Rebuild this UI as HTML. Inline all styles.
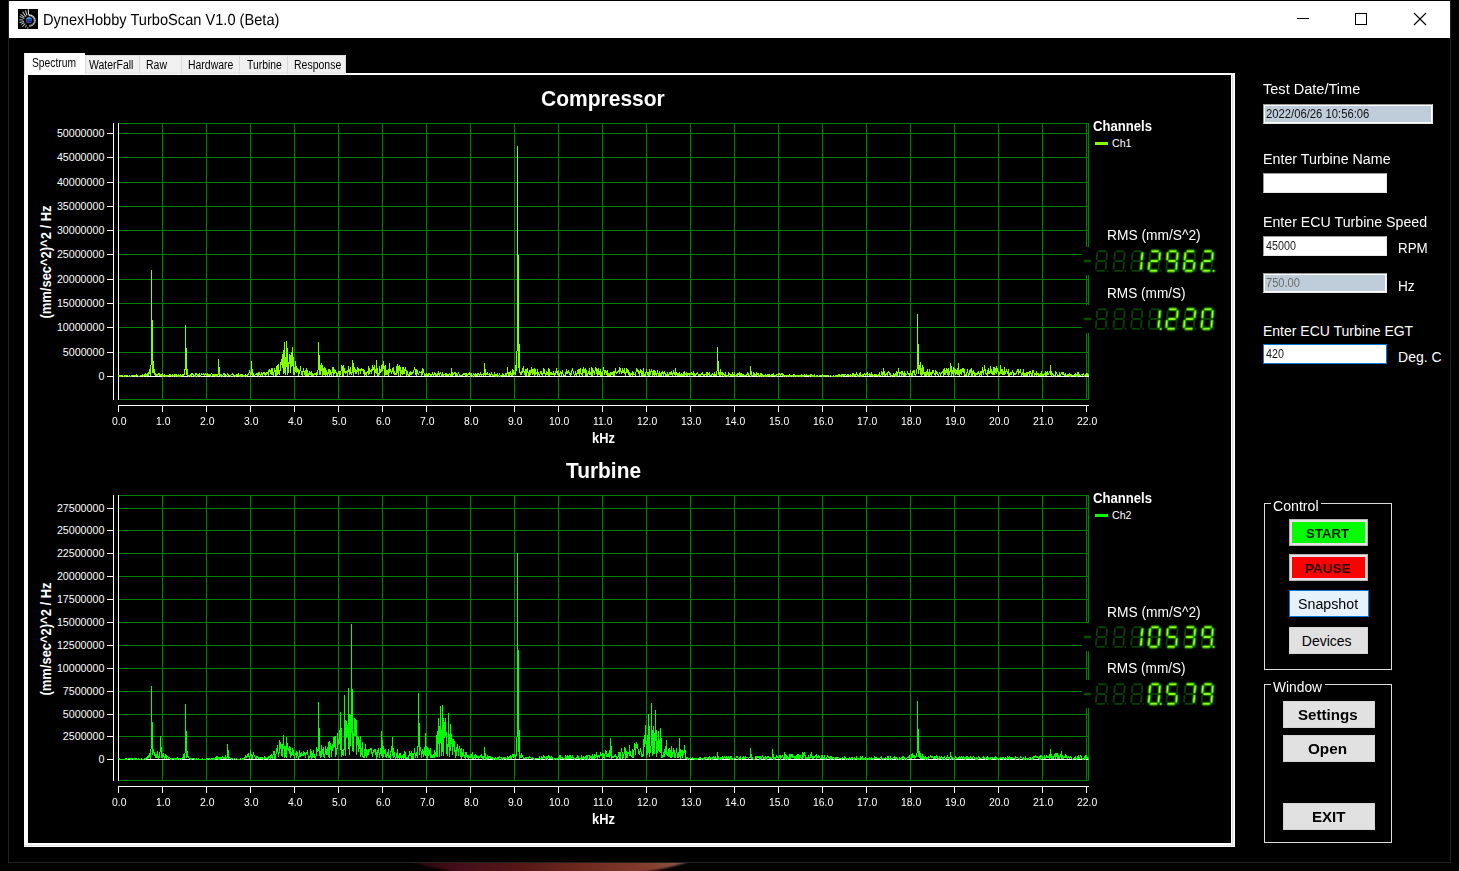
<!DOCTYPE html>
<html lang="en">
<head>
<meta charset="utf-8">
<title>DynexHobby TurboScan V1.0 (Beta)</title>
<style>
html,body{margin:0;padding:0;background:#000;}
html{width:1459px;height:871px;overflow:hidden;}
#desk{left:0;top:0;width:1459px;height:871px;overflow:hidden;}
body{width:1459px;height:871px;position:relative;overflow:hidden;
 font-family:"Liberation Sans",sans-serif;}
.abs,.t{position:absolute;}
.t{line-height:1;white-space:nowrap;transform-origin:0 0;color:#fff;}
#blob{left:398px;top:822px;width:304px;height:56px;border-radius:50%;filter:blur(1.2px);
 background:linear-gradient(90deg,#14040a 0%,#2e080e 8%,#47101a 22%,#551716 40%,#6a271d 58%,#7c3528 74%,#86402f 84%,#8a5748 92%,#9a8a84 97%,#3a3030 100%);}
#win{left:8px;top:0;width:1441px;height:861px;border:1px solid #222;border-top-color:#000;background:#000;}
#tb{left:9px;top:1px;width:1441px;height:37px;background:#fff;}
.tab{position:absolute;top:55px;height:19px;background:#f0f0f0;border:1px solid #d9d9d9;border-bottom-color:#e4e4e4;box-sizing:border-box;}
#tabsel{left:24px;top:53px;width:61px;height:22px;background:#fff;border-left:1px solid #e6e6e6;box-sizing:border-box;z-index:2;}
#panel{left:24px;top:73px;width:1203px;height:768px;border:4px solid #fff;border-top-width:2px;background:#000;}
#panel:after{content:"";position:absolute;left:-4px;right:-2px;bottom:-3px;height:1px;background:#e2e2e2;}
#panel:before{content:"";position:absolute;right:-2px;top:-2px;bottom:-3px;width:1px;background:#dedede;box-shadow:1px 0 0 #f4f4f4;}
.fld{position:absolute;box-sizing:border-box;height:20px;border:1px solid #9a9a9a;border-right-color:#e8e8e8;border-bottom-color:#e8e8e8;background:#fff;}
.fld.ro{background:#bfcddb;box-shadow:inset 0 0 0 1px #fff;}
.fld.foc{border:1px solid #0078d7;}
.grp{position:absolute;box-sizing:border-box;border:1px solid #dcdcdc;}
.btn{position:absolute;box-sizing:border-box;background:#e1e1e1;border:1px solid #d4d4d4;}
.btn.c{border:1px solid #b9b5b7;box-shadow:inset 0 0 0 2px #e6e1e3;}
svg{position:absolute;left:0;top:0;}
</style>
</head>
<body>
<div class="abs" id="desk"><div class="abs" id="blob"></div></div><div class="abs" id="win"></div><div class="abs" id="tb"></div><svg width="1459" height="40" viewBox="0 0 1459 40">
<rect x="18" y="9" width="20" height="20" fill="#000"/>
<defs><linearGradient id="ib" x1="0" y1="0" x2="0" y2="1"><stop offset="0" stop-color="#49c8ff"/><stop offset=".45" stop-color="#2466e4"/><stop offset="1" stop-color="#4b3cb0"/></linearGradient>
<linearGradient id="ir" x1="0" y1="0" x2="0" y2="1"><stop offset="0" stop-color="#dedede"/><stop offset=".5" stop-color="#b2b2b2"/><stop offset="1" stop-color="#a6a6a6"/></linearGradient></defs>
<g fill="none">
<path d="M28.3 9.2 L28.5 14.8" stroke="#dadada" stroke-width="1.1"/>
<path d="M28.7 15.4 A5.2 5.2 0 1 1 29.1 25.7" stroke="url(#ir)" stroke-width="1.9" stroke-dasharray="1.7 0.22"/>
<path d="M27.7 27.2 L27.8 28.9" stroke="#9c9c9c" stroke-width="1"/>
<g stroke-width="1.05"><line x1="27.0" y1="15.4" x2="25.4" y2="10.3" stroke="#c9c9c9"/><line x1="26.0" y1="16.6" x2="22.6" y2="11.7" stroke="#c4c4c4"/><line x1="24.4" y1="17.3" x2="20.4" y2="14.4" stroke="#b4b4b4"/><line x1="24.4" y1="18.6" x2="19.6" y2="16.6" stroke="#a8a8a8"/><line x1="23.4" y1="20.0" x2="19.3" y2="19.7" stroke="#b4b4b4"/><line x1="24.1" y1="21.4" x2="19.6" y2="22.4" stroke="#bcbcbc"/><line x1="24.0" y1="22.8" x2="21.0" y2="24.4" stroke="#b4b4b4"/><line x1="25.3" y1="23.6" x2="22.3" y2="26.6" stroke="#b0b0b0"/><line x1="26.4" y1="25.1" x2="25.4" y2="27.4" stroke="#b8b8b8"/></g></g>
<circle cx="28.95" cy="20.2" r="3.05" fill="url(#ib)"/>
<text x="29.0" y="21.7" font-family="Liberation Sans, sans-serif" font-size="4.3" font-weight="bold" text-anchor="middle" fill="#0e1638">3D</text>
<g fill="none" stroke="#000" stroke-width="1" shape-rendering="crispEdges">
<line x1="1297" y1="18.5" x2="1309" y2="18.5"/>
<rect x="1355.5" y="13.5" width="11" height="11"/>
</g>
<g fill="none" stroke="#000" stroke-width="1.1">
<line x1="1414" y1="13" x2="1426" y2="25"/>
<line x1="1426" y1="13" x2="1414" y2="25"/>
</g>
</svg><span class="t" style="left:42.60px;top:13px;font-size:16px;transform:scaleX(0.9134);color:#000;text-rendering:geometricPrecision;">DynexHobby TurboScan V1.0 (Beta)</span><div class="abs" id="panel"></div><div class="abs" style="left:24px;top:74px;width:1211px;height:1px;background:#fff"></div><div class="abs" id="tabsel"></div><span class="t" style="left:32.10px;top:57px;font-size:12px;transform:scaleX(0.8567);color:#000;z-index:3;">Spectrum</span><div class="tab" style="left:85px;width:55px"></div><span class="t" style="left:89.00px;top:59px;font-size:12px;transform:scaleX(0.8721);color:#000;">WaterFall</span><div class="tab" style="left:139px;width:43px"></div><span class="t" style="left:146.40px;top:59px;font-size:12px;transform:scaleX(0.8739);color:#000;">Raw</span><div class="tab" style="left:181px;width:59px"></div><span class="t" style="left:188.00px;top:59px;font-size:12px;transform:scaleX(0.8708);color:#000;">Hardware</span><div class="tab" style="left:239px;width:49px"></div><span class="t" style="left:246.60px;top:59px;font-size:12px;transform:scaleX(0.8650);color:#000;">Turbine</span><div class="tab" style="left:287px;width:59px"></div><span class="t" style="left:294.10px;top:59px;font-size:12px;transform:scaleX(0.8754);color:#000;">Response</span><svg width="1235" height="296" viewBox="0 121 1235 296" style="top:121px"><g shape-rendering="crispEdges" fill="none" stroke-width="1"><path stroke="#008000" d="M118 376.5H1089M118 352.5H1089M118 327.5H1089M118 303.5H1089M118 279.5H1089M118 254.5H1089M118 230.5H1089M118 206.5H1089M118 182.5H1089M118 157.5H1089M118 133.5H1089M118 123.5H1089M118 399.5H1089M162.5 123V400M206.5 123V400M250.5 123V400M294.5 123V400M338.5 123V400M382.5 123V400M426.5 123V400M470.5 123V400M514.5 123V400M558.5 123V400M602.5 123V400M646.5 123V400M690.5 123V400M734.5 123V400M778.5 123V400M822.5 123V400M866.5 123V400M910.5 123V400M954.5 123V400M998.5 123V400M1042.5 123V400M1086.5 123V400M1088.5 123V400"/><path stroke="#fff" d="M113.5 123V400M118.5 123V400M118 376.5H1089M118 405.5H1089M107 376.5H114M107 352.5H114M107 327.5H114M107 303.5H114M107 279.5H114M107 254.5H114M107 230.5H114M107 206.5H114M107 182.5H114M107 157.5H114M107 133.5H114M118.5 405V412M162.5 405V412M206.5 405V412M250.5 405V412M294.5 405V412M338.5 405V412M382.5 405V412M426.5 405V412M470.5 405V412M514.5 405V412M558.5 405V412M602.5 405V412M646.5 405V412M690.5 405V412M734.5 405V412M778.5 405V412M822.5 405V412M866.5 405V412M910.5 405V412M954.5 405V412M998.5 405V412M1042.5 405V412M1086.5 405V412"/></g><polyline fill="none" stroke="#7fff00" stroke-width="1" stroke-linejoin="bevel" stroke-linecap="square" shape-rendering="crispEdges" points="118.5,376.5 118.5,375.5 119.5,375.5 119.5,376.5 120.5,376.5 120.5,375.5 121.5,376.5 121.5,375.5 122.5,375.5 122.5,375.5 123.5,376.5 123.5,376.5 124.5,376.5 124.5,375.5 125.5,375.5 125.5,376.5 126.5,375.5 126.5,375.5 127.5,375.5 127.5,375.5 128.5,376.5 128.5,376.5 129.5,375.5 129.5,376.5 130.5,376.5 130.5,376.5 131.5,376.5 131.5,375.5 132.5,375.5 132.5,375.5 133.5,375.5 133.5,375.5 134.5,375.5 134.5,375.5 135.5,375.5 135.5,376.5 136.5,374.5 136.5,374.5 137.5,375.5 137.5,375.5 138.5,376.5 138.5,376.5 139.5,376.5 139.5,376.5 140.5,375.5 140.5,375.5 141.5,375.5 141.5,375.5 142.5,374.5 142.5,374.5 143.5,376.5 143.5,376.5 144.5,374.5 144.5,375.5 145.5,373.5 145.5,375.5 146.5,376.5 146.5,374.5 147.5,373.5 147.5,375.5 148.5,375.5 148.5,375.5 149.5,369.5 149.5,371.5 150.5,375.5 150.5,370.5 151.5,359.5 151.5,270.5 152.5,366.5 152.5,372.5 153.5,361.5 153.5,371.5 154.5,374.5 154.5,369.5 155.5,375.5 155.5,373.5 156.5,375.5 156.5,375.5 157.5,375.5 157.5,375.5 158.5,373.5 158.5,374.5 159.5,375.5 159.5,373.5 160.5,375.5 160.5,375.5 161.5,374.5 161.5,374.5 162.5,376.5 162.5,373.5 163.5,376.5 163.5,375.5 164.5,374.5 164.5,375.5 165.5,375.5 165.5,376.5 166.5,376.5 166.5,375.5 167.5,376.5 167.5,375.5 168.5,375.5 168.5,375.5 169.5,374.5 169.5,375.5 170.5,375.5 170.5,374.5 171.5,376.5 171.5,376.5 172.5,374.5 172.5,374.5 173.5,376.5 173.5,376.5 174.5,375.5 174.5,374.5 175.5,376.5 175.5,374.5 176.5,374.5 176.5,375.5 177.5,375.5 177.5,376.5 178.5,376.5 178.5,374.5 179.5,376.5 179.5,375.5 180.5,376.5 180.5,374.5 181.5,375.5 181.5,375.5 182.5,375.5 182.5,374.5 183.5,375.5 183.5,375.5 184.5,373.5 184.5,370.5 185.5,368.5 185.5,325.5 186.5,369.5 186.5,374.5 187.5,369.5 187.5,375.5 188.5,375.5 188.5,376.5 189.5,375.5 189.5,375.5 190.5,374.5 190.5,376.5 191.5,375.5 191.5,373.5 192.5,373.5 192.5,374.5 193.5,374.5 193.5,374.5 194.5,376.5 194.5,376.5 195.5,376.5 195.5,373.5 196.5,374.5 196.5,373.5 197.5,376.5 197.5,374.5 198.5,375.5 198.5,374.5 199.5,375.5 199.5,373.5 200.5,376.5 200.5,375.5 201.5,374.5 201.5,373.5 202.5,374.5 202.5,374.5 203.5,374.5 203.5,373.5 204.5,375.5 204.5,374.5 205.5,373.5 205.5,373.5 206.5,375.5 206.5,374.5 207.5,373.5 207.5,375.5 208.5,374.5 208.5,375.5 209.5,375.5 209.5,374.5 210.5,376.5 210.5,374.5 211.5,373.5 211.5,373.5 212.5,374.5 212.5,375.5 213.5,374.5 213.5,375.5 214.5,375.5 214.5,374.5 215.5,376.5 215.5,374.5 216.5,376.5 216.5,374.5 217.5,374.5 217.5,375.5 218.5,373.5 218.5,359.5 219.5,374.5 219.5,375.5 220.5,374.5 220.5,376.5 221.5,375.5 221.5,374.5 222.5,376.5 222.5,376.5 223.5,373.5 223.5,374.5 224.5,375.5 224.5,373.5 225.5,375.5 225.5,374.5 226.5,376.5 226.5,375.5 227.5,374.5 227.5,373.5 228.5,374.5 228.5,375.5 229.5,375.5 229.5,375.5 230.5,376.5 230.5,375.5 231.5,374.5 231.5,374.5 232.5,374.5 232.5,373.5 233.5,375.5 233.5,376.5 234.5,375.5 234.5,375.5 235.5,376.5 235.5,375.5 236.5,374.5 236.5,375.5 237.5,375.5 237.5,374.5 238.5,373.5 238.5,375.5 239.5,376.5 239.5,376.5 240.5,374.5 240.5,376.5 241.5,374.5 241.5,375.5 242.5,375.5 242.5,374.5 243.5,376.5 243.5,376.5 244.5,375.5 244.5,376.5 245.5,374.5 245.5,375.5 246.5,376.5 246.5,376.5 247.5,374.5 247.5,375.5 248.5,373.5 248.5,373.5 249.5,372.5 249.5,370.5 250.5,373.5 250.5,375.5 251.5,374.5 251.5,361.5 252.5,375.5 252.5,375.5 253.5,373.5 253.5,375.5 254.5,375.5 254.5,375.5 255.5,374.5 255.5,374.5 256.5,374.5 256.5,373.5 257.5,375.5 257.5,373.5 258.5,372.5 258.5,376.5 259.5,372.5 259.5,373.5 260.5,375.5 260.5,374.5 261.5,374.5 261.5,372.5 262.5,375.5 262.5,374.5 263.5,372.5 263.5,373.5 264.5,372.5 264.5,374.5 265.5,373.5 265.5,375.5 266.5,373.5 266.5,372.5 267.5,373.5 267.5,372.5 268.5,375.5 268.5,370.5 269.5,369.5 269.5,369.5 270.5,373.5 270.5,370.5 271.5,374.5 271.5,368.5 272.5,368.5 272.5,373.5 273.5,375.5 273.5,372.5 274.5,371.5 274.5,368.5 275.5,371.5 275.5,375.5 276.5,366.5 276.5,375.5 277.5,365.5 277.5,374.5 278.5,372.5 278.5,364.5 279.5,374.5 279.5,374.5 280.5,368.5 280.5,364.5 281.5,360.5 281.5,364.5 282.5,354.5 282.5,367.5 283.5,350.5 283.5,373.5 284.5,371.5 284.5,342.5 285.5,370.5 285.5,374.5 286.5,360.5 286.5,341.5 287.5,353.5 287.5,374.5 288.5,370.5 288.5,368.5 289.5,356.5 289.5,354.5 290.5,372.5 290.5,357.5 291.5,352.5 291.5,366.5 292.5,364.5 292.5,347.5 293.5,366.5 293.5,374.5 294.5,367.5 294.5,374.5 295.5,361.5 295.5,370.5 296.5,372.5 296.5,366.5 297.5,370.5 297.5,371.5 298.5,369.5 298.5,375.5 299.5,371.5 299.5,373.5 300.5,366.5 300.5,366.5 301.5,374.5 301.5,372.5 302.5,375.5 302.5,373.5 303.5,369.5 303.5,368.5 304.5,373.5 304.5,374.5 305.5,375.5 305.5,372.5 306.5,368.5 306.5,375.5 307.5,370.5 307.5,375.5 308.5,375.5 308.5,375.5 309.5,371.5 309.5,374.5 310.5,374.5 310.5,372.5 311.5,375.5 311.5,371.5 312.5,375.5 312.5,373.5 313.5,375.5 313.5,375.5 314.5,373.5 314.5,373.5 315.5,374.5 315.5,374.5 316.5,372.5 316.5,375.5 317.5,374.5 317.5,370.5 318.5,369.5 318.5,342.5 319.5,366.5 319.5,374.5 320.5,365.5 320.5,374.5 321.5,368.5 321.5,363.5 322.5,367.5 322.5,375.5 323.5,374.5 323.5,368.5 324.5,374.5 324.5,367.5 325.5,368.5 325.5,375.5 326.5,374.5 326.5,370.5 327.5,374.5 327.5,375.5 328.5,369.5 328.5,373.5 329.5,369.5 329.5,375.5 330.5,373.5 330.5,370.5 331.5,375.5 331.5,374.5 332.5,370.5 332.5,367.5 333.5,367.5 333.5,375.5 334.5,372.5 334.5,369.5 335.5,372.5 335.5,370.5 336.5,374.5 336.5,375.5 337.5,375.5 337.5,375.5 338.5,371.5 338.5,372.5 339.5,371.5 339.5,375.5 340.5,374.5 340.5,374.5 341.5,367.5 341.5,365.5 342.5,366.5 342.5,375.5 343.5,375.5 343.5,365.5 344.5,372.5 344.5,368.5 345.5,373.5 345.5,372.5 346.5,371.5 346.5,372.5 347.5,370.5 347.5,375.5 348.5,368.5 348.5,366.5 349.5,374.5 349.5,371.5 350.5,367.5 350.5,372.5 351.5,374.5 351.5,374.5 352.5,370.5 352.5,360.5 353.5,365.5 353.5,375.5 354.5,369.5 354.5,367.5 355.5,371.5 355.5,373.5 356.5,372.5 356.5,373.5 357.5,367.5 357.5,369.5 358.5,374.5 358.5,368.5 359.5,370.5 359.5,370.5 360.5,369.5 360.5,373.5 361.5,368.5 361.5,368.5 362.5,370.5 362.5,369.5 363.5,369.5 363.5,373.5 364.5,370.5 364.5,375.5 365.5,374.5 365.5,372.5 366.5,375.5 366.5,373.5 367.5,371.5 367.5,371.5 368.5,374.5 368.5,366.5 369.5,370.5 369.5,373.5 370.5,370.5 370.5,371.5 371.5,372.5 371.5,373.5 372.5,365.5 372.5,370.5 373.5,369.5 373.5,369.5 374.5,365.5 374.5,375.5 375.5,370.5 375.5,369.5 376.5,373.5 376.5,360.5 377.5,375.5 377.5,375.5 378.5,373.5 378.5,375.5 379.5,374.5 379.5,366.5 380.5,371.5 380.5,372.5 381.5,365.5 381.5,371.5 382.5,364.5 382.5,370.5 383.5,367.5 383.5,361.5 384.5,370.5 384.5,375.5 385.5,374.5 385.5,365.5 386.5,374.5 386.5,372.5 387.5,374.5 387.5,371.5 388.5,369.5 388.5,375.5 389.5,363.5 389.5,372.5 390.5,370.5 390.5,369.5 391.5,372.5 391.5,373.5 392.5,368.5 392.5,369.5 393.5,373.5 393.5,367.5 394.5,373.5 394.5,374.5 395.5,373.5 395.5,374.5 396.5,374.5 396.5,366.5 397.5,372.5 397.5,364.5 398.5,368.5 398.5,375.5 399.5,365.5 399.5,366.5 400.5,375.5 400.5,367.5 401.5,373.5 401.5,372.5 402.5,367.5 402.5,374.5 403.5,372.5 403.5,367.5 404.5,370.5 404.5,373.5 405.5,367.5 405.5,369.5 406.5,371.5 406.5,375.5 407.5,371.5 407.5,373.5 408.5,375.5 408.5,375.5 409.5,372.5 409.5,375.5 410.5,373.5 410.5,371.5 411.5,373.5 411.5,374.5 412.5,372.5 412.5,373.5 413.5,370.5 413.5,372.5 414.5,367.5 414.5,368.5 415.5,370.5 415.5,374.5 416.5,375.5 416.5,369.5 417.5,370.5 417.5,372.5 418.5,374.5 418.5,374.5 419.5,371.5 419.5,372.5 420.5,372.5 420.5,372.5 421.5,371.5 421.5,375.5 422.5,374.5 422.5,368.5 423.5,369.5 423.5,369.5 424.5,375.5 424.5,375.5 425.5,375.5 425.5,374.5 426.5,373.5 426.5,375.5 427.5,374.5 427.5,375.5 428.5,375.5 428.5,373.5 429.5,374.5 429.5,373.5 430.5,375.5 430.5,374.5 431.5,375.5 431.5,375.5 432.5,373.5 432.5,372.5 433.5,375.5 433.5,375.5 434.5,372.5 434.5,374.5 435.5,373.5 435.5,375.5 436.5,375.5 436.5,375.5 437.5,373.5 437.5,375.5 438.5,373.5 438.5,371.5 439.5,375.5 439.5,374.5 440.5,373.5 440.5,372.5 441.5,375.5 441.5,375.5 442.5,375.5 442.5,372.5 443.5,375.5 443.5,375.5 444.5,374.5 444.5,374.5 445.5,373.5 445.5,375.5 446.5,373.5 446.5,375.5 447.5,375.5 447.5,374.5 448.5,375.5 448.5,375.5 449.5,373.5 449.5,373.5 450.5,375.5 450.5,375.5 451.5,375.5 451.5,368.5 452.5,375.5 452.5,375.5 453.5,373.5 453.5,374.5 454.5,372.5 454.5,372.5 455.5,372.5 455.5,375.5 456.5,373.5 456.5,375.5 457.5,375.5 457.5,375.5 458.5,372.5 458.5,372.5 459.5,375.5 459.5,375.5 460.5,375.5 460.5,375.5 461.5,375.5 461.5,375.5 462.5,375.5 462.5,374.5 463.5,373.5 463.5,374.5 464.5,373.5 464.5,374.5 465.5,375.5 465.5,373.5 466.5,373.5 466.5,375.5 467.5,376.5 467.5,374.5 468.5,374.5 468.5,374.5 469.5,372.5 469.5,374.5 470.5,373.5 470.5,376.5 471.5,374.5 471.5,373.5 472.5,376.5 472.5,376.5 473.5,373.5 473.5,373.5 474.5,376.5 474.5,374.5 475.5,375.5 475.5,373.5 476.5,374.5 476.5,375.5 477.5,375.5 477.5,373.5 478.5,374.5 478.5,373.5 479.5,375.5 479.5,375.5 480.5,372.5 480.5,374.5 481.5,375.5 481.5,374.5 482.5,374.5 482.5,374.5 483.5,373.5 483.5,375.5 484.5,373.5 484.5,363.5 485.5,373.5 485.5,375.5 486.5,373.5 486.5,373.5 487.5,372.5 487.5,374.5 488.5,374.5 488.5,374.5 489.5,373.5 489.5,375.5 490.5,375.5 490.5,375.5 491.5,373.5 491.5,372.5 492.5,375.5 492.5,375.5 493.5,375.5 493.5,375.5 494.5,375.5 494.5,372.5 495.5,376.5 495.5,375.5 496.5,376.5 496.5,374.5 497.5,373.5 497.5,375.5 498.5,376.5 498.5,375.5 499.5,374.5 499.5,373.5 500.5,376.5 500.5,376.5 501.5,375.5 501.5,375.5 502.5,375.5 502.5,373.5 503.5,374.5 503.5,375.5 504.5,375.5 504.5,375.5 505.5,375.5 505.5,373.5 506.5,375.5 506.5,374.5 507.5,372.5 507.5,367.5 508.5,375.5 508.5,375.5 509.5,372.5 509.5,375.5 510.5,374.5 510.5,371.5 511.5,374.5 511.5,375.5 512.5,375.5 512.5,369.5 513.5,370.5 513.5,374.5 514.5,372.5 514.5,372.5 515.5,374.5 515.5,365.5 516.5,370.5 516.5,362.5 517.5,339.5 517.5,146.5 518.5,360.5 518.5,367.5 519.5,344.5 519.5,370.5 520.5,374.5 520.5,374.5 521.5,374.5 521.5,374.5 522.5,368.5 522.5,372.5 523.5,371.5 523.5,366.5 524.5,374.5 524.5,372.5 525.5,375.5 525.5,369.5 526.5,375.5 526.5,369.5 527.5,368.5 527.5,369.5 528.5,375.5 528.5,374.5 529.5,370.5 529.5,375.5 530.5,373.5 530.5,373.5 531.5,367.5 531.5,372.5 532.5,369.5 532.5,374.5 533.5,369.5 533.5,373.5 534.5,368.5 534.5,375.5 535.5,369.5 535.5,374.5 536.5,372.5 536.5,372.5 537.5,375.5 537.5,369.5 538.5,374.5 538.5,374.5 539.5,375.5 539.5,374.5 540.5,373.5 540.5,371.5 541.5,374.5 541.5,371.5 542.5,375.5 542.5,373.5 543.5,373.5 543.5,368.5 544.5,369.5 544.5,371.5 545.5,375.5 545.5,374.5 546.5,371.5 546.5,374.5 547.5,372.5 547.5,373.5 548.5,375.5 548.5,368.5 549.5,370.5 549.5,375.5 550.5,372.5 550.5,374.5 551.5,374.5 551.5,372.5 552.5,374.5 552.5,374.5 553.5,374.5 553.5,371.5 554.5,374.5 554.5,375.5 555.5,371.5 555.5,374.5 556.5,368.5 556.5,372.5 557.5,371.5 557.5,374.5 558.5,370.5 558.5,375.5 559.5,375.5 559.5,375.5 560.5,371.5 560.5,371.5 561.5,375.5 561.5,374.5 562.5,370.5 562.5,372.5 563.5,375.5 563.5,375.5 564.5,375.5 564.5,375.5 565.5,374.5 565.5,375.5 566.5,369.5 566.5,373.5 567.5,373.5 567.5,372.5 568.5,370.5 568.5,370.5 569.5,374.5 569.5,374.5 570.5,373.5 570.5,375.5 571.5,374.5 571.5,371.5 572.5,368.5 572.5,370.5 573.5,371.5 573.5,372.5 574.5,375.5 574.5,374.5 575.5,374.5 575.5,371.5 576.5,375.5 576.5,374.5 577.5,373.5 577.5,370.5 578.5,369.5 578.5,372.5 579.5,375.5 579.5,370.5 580.5,368.5 580.5,372.5 581.5,374.5 581.5,373.5 582.5,375.5 582.5,371.5 583.5,367.5 583.5,372.5 584.5,371.5 584.5,369.5 585.5,375.5 585.5,368.5 586.5,371.5 586.5,375.5 587.5,375.5 587.5,374.5 588.5,372.5 588.5,371.5 589.5,374.5 589.5,368.5 590.5,374.5 590.5,373.5 591.5,375.5 591.5,367.5 592.5,375.5 592.5,368.5 593.5,372.5 593.5,372.5 594.5,372.5 594.5,374.5 595.5,368.5 595.5,367.5 596.5,369.5 596.5,372.5 597.5,375.5 597.5,369.5 598.5,374.5 598.5,368.5 599.5,374.5 599.5,372.5 600.5,369.5 600.5,375.5 601.5,372.5 601.5,375.5 602.5,375.5 602.5,375.5 603.5,367.5 603.5,368.5 604.5,371.5 604.5,374.5 605.5,371.5 605.5,370.5 606.5,374.5 606.5,372.5 607.5,370.5 607.5,375.5 608.5,375.5 608.5,373.5 609.5,375.5 609.5,373.5 610.5,372.5 610.5,375.5 611.5,372.5 611.5,374.5 612.5,372.5 612.5,374.5 613.5,371.5 613.5,375.5 614.5,371.5 614.5,375.5 615.5,368.5 615.5,372.5 616.5,373.5 616.5,373.5 617.5,371.5 617.5,371.5 618.5,370.5 618.5,370.5 619.5,373.5 619.5,367.5 620.5,369.5 620.5,369.5 621.5,373.5 621.5,373.5 622.5,372.5 622.5,368.5 623.5,372.5 623.5,372.5 624.5,373.5 624.5,368.5 625.5,374.5 625.5,375.5 626.5,370.5 626.5,368.5 627.5,370.5 627.5,372.5 628.5,370.5 628.5,374.5 629.5,372.5 629.5,375.5 630.5,375.5 630.5,373.5 631.5,373.5 631.5,373.5 632.5,375.5 632.5,371.5 633.5,373.5 633.5,374.5 634.5,374.5 634.5,374.5 635.5,374.5 635.5,375.5 636.5,369.5 636.5,368.5 637.5,371.5 637.5,369.5 638.5,373.5 638.5,370.5 639.5,375.5 639.5,371.5 640.5,372.5 640.5,369.5 641.5,375.5 641.5,370.5 642.5,375.5 642.5,373.5 643.5,368.5 643.5,375.5 644.5,375.5 644.5,374.5 645.5,374.5 645.5,375.5 646.5,369.5 646.5,370.5 647.5,374.5 647.5,374.5 648.5,372.5 648.5,375.5 649.5,375.5 649.5,369.5 650.5,374.5 650.5,373.5 651.5,369.5 651.5,369.5 652.5,373.5 652.5,375.5 653.5,374.5 653.5,370.5 654.5,370.5 654.5,375.5 655.5,371.5 655.5,374.5 656.5,374.5 656.5,375.5 657.5,371.5 657.5,370.5 658.5,375.5 658.5,373.5 659.5,375.5 659.5,371.5 660.5,375.5 660.5,375.5 661.5,372.5 661.5,375.5 662.5,371.5 662.5,371.5 663.5,372.5 663.5,375.5 664.5,372.5 664.5,371.5 665.5,374.5 665.5,375.5 666.5,375.5 666.5,375.5 667.5,372.5 667.5,375.5 668.5,375.5 668.5,375.5 669.5,373.5 669.5,372.5 670.5,374.5 670.5,373.5 671.5,371.5 671.5,373.5 672.5,375.5 672.5,375.5 673.5,370.5 673.5,372.5 674.5,374.5 674.5,372.5 675.5,375.5 675.5,368.5 676.5,374.5 676.5,373.5 677.5,373.5 677.5,375.5 678.5,373.5 678.5,375.5 679.5,375.5 679.5,372.5 680.5,375.5 680.5,375.5 681.5,373.5 681.5,375.5 682.5,375.5 682.5,374.5 683.5,375.5 683.5,372.5 684.5,371.5 684.5,375.5 685.5,374.5 685.5,373.5 686.5,375.5 686.5,372.5 687.5,374.5 687.5,375.5 688.5,374.5 688.5,373.5 689.5,375.5 689.5,373.5 690.5,373.5 690.5,374.5 691.5,374.5 691.5,372.5 692.5,373.5 692.5,374.5 693.5,371.5 693.5,375.5 694.5,373.5 694.5,375.5 695.5,374.5 695.5,375.5 696.5,374.5 696.5,373.5 697.5,373.5 697.5,372.5 698.5,375.5 698.5,374.5 699.5,375.5 699.5,374.5 700.5,374.5 700.5,375.5 701.5,374.5 701.5,373.5 702.5,374.5 702.5,372.5 703.5,375.5 703.5,375.5 704.5,375.5 704.5,374.5 705.5,374.5 705.5,374.5 706.5,375.5 706.5,372.5 707.5,375.5 707.5,372.5 708.5,374.5 708.5,374.5 709.5,372.5 709.5,375.5 710.5,375.5 710.5,375.5 711.5,375.5 711.5,375.5 712.5,373.5 712.5,374.5 713.5,375.5 713.5,374.5 714.5,375.5 714.5,372.5 715.5,375.5 715.5,375.5 716.5,375.5 716.5,371.5 717.5,370.5 717.5,347.5 718.5,374.5 718.5,374.5 719.5,372.5 719.5,375.5 720.5,369.5 720.5,375.5 721.5,374.5 721.5,372.5 722.5,372.5 722.5,375.5 723.5,374.5 723.5,373.5 724.5,376.5 724.5,375.5 725.5,372.5 725.5,375.5 726.5,375.5 726.5,375.5 727.5,375.5 727.5,376.5 728.5,376.5 728.5,372.5 729.5,373.5 729.5,373.5 730.5,375.5 730.5,375.5 731.5,374.5 731.5,375.5 732.5,375.5 732.5,372.5 733.5,375.5 733.5,375.5 734.5,372.5 734.5,374.5 735.5,376.5 735.5,375.5 736.5,374.5 736.5,376.5 737.5,375.5 737.5,373.5 738.5,373.5 738.5,374.5 739.5,372.5 739.5,375.5 740.5,375.5 740.5,373.5 741.5,375.5 741.5,373.5 742.5,375.5 742.5,375.5 743.5,375.5 743.5,374.5 744.5,375.5 744.5,375.5 745.5,375.5 745.5,375.5 746.5,375.5 746.5,375.5 747.5,372.5 747.5,374.5 748.5,373.5 748.5,375.5 749.5,375.5 749.5,375.5 750.5,374.5 750.5,366.5 751.5,375.5 751.5,376.5 752.5,375.5 752.5,375.5 753.5,375.5 753.5,372.5 754.5,374.5 754.5,375.5 755.5,375.5 755.5,375.5 756.5,372.5 756.5,375.5 757.5,373.5 757.5,374.5 758.5,373.5 758.5,376.5 759.5,375.5 759.5,375.5 760.5,376.5 760.5,373.5 761.5,375.5 761.5,373.5 762.5,374.5 762.5,376.5 763.5,375.5 763.5,375.5 764.5,376.5 764.5,375.5 765.5,374.5 765.5,376.5 766.5,375.5 766.5,375.5 767.5,374.5 767.5,376.5 768.5,374.5 768.5,375.5 769.5,374.5 769.5,374.5 770.5,376.5 770.5,375.5 771.5,375.5 771.5,374.5 772.5,375.5 772.5,375.5 773.5,373.5 773.5,375.5 774.5,375.5 774.5,375.5 775.5,375.5 775.5,376.5 776.5,376.5 776.5,374.5 777.5,374.5 777.5,374.5 778.5,373.5 778.5,375.5 779.5,374.5 779.5,373.5 780.5,375.5 780.5,374.5 781.5,374.5 781.5,373.5 782.5,373.5 782.5,375.5 783.5,374.5 783.5,376.5 784.5,375.5 784.5,375.5 785.5,376.5 785.5,375.5 786.5,375.5 786.5,375.5 787.5,375.5 787.5,376.5 788.5,375.5 788.5,375.5 789.5,376.5 789.5,374.5 790.5,375.5 790.5,376.5 791.5,375.5 791.5,375.5 792.5,376.5 792.5,375.5 793.5,374.5 793.5,375.5 794.5,374.5 794.5,376.5 795.5,375.5 795.5,375.5 796.5,376.5 796.5,375.5 797.5,376.5 797.5,375.5 798.5,375.5 798.5,375.5 799.5,375.5 799.5,376.5 800.5,376.5 800.5,375.5 801.5,374.5 801.5,375.5 802.5,376.5 802.5,375.5 803.5,376.5 803.5,375.5 804.5,375.5 804.5,374.5 805.5,375.5 805.5,375.5 806.5,374.5 806.5,375.5 807.5,375.5 807.5,375.5 808.5,375.5 808.5,375.5 809.5,376.5 809.5,375.5 810.5,374.5 810.5,375.5 811.5,374.5 811.5,376.5 812.5,376.5 812.5,375.5 813.5,376.5 813.5,376.5 814.5,374.5 814.5,376.5 815.5,376.5 815.5,376.5 816.5,375.5 816.5,376.5 817.5,376.5 817.5,375.5 818.5,376.5 818.5,376.5 819.5,375.5 819.5,375.5 820.5,375.5 820.5,375.5 821.5,375.5 821.5,375.5 822.5,374.5 822.5,376.5 823.5,376.5 823.5,375.5 824.5,376.5 824.5,375.5 825.5,375.5 825.5,375.5 826.5,375.5 826.5,375.5 827.5,376.5 827.5,375.5 828.5,375.5 828.5,375.5 829.5,376.5 829.5,376.5 830.5,375.5 830.5,375.5 831.5,376.5 831.5,376.5 832.5,376.5 832.5,376.5 833.5,375.5 833.5,376.5 834.5,376.5 834.5,376.5 835.5,376.5 835.5,375.5 836.5,376.5 836.5,375.5 837.5,375.5 837.5,375.5 838.5,376.5 838.5,374.5 839.5,374.5 839.5,376.5 840.5,376.5 840.5,375.5 841.5,374.5 841.5,375.5 842.5,374.5 842.5,376.5 843.5,374.5 843.5,375.5 844.5,375.5 844.5,374.5 845.5,374.5 845.5,374.5 846.5,375.5 846.5,375.5 847.5,374.5 847.5,375.5 848.5,374.5 848.5,374.5 849.5,376.5 849.5,375.5 850.5,374.5 850.5,375.5 851.5,376.5 851.5,376.5 852.5,374.5 852.5,373.5 853.5,373.5 853.5,376.5 854.5,374.5 854.5,375.5 855.5,374.5 855.5,375.5 856.5,373.5 856.5,372.5 857.5,376.5 857.5,374.5 858.5,376.5 858.5,376.5 859.5,375.5 859.5,374.5 860.5,372.5 860.5,376.5 861.5,375.5 861.5,376.5 862.5,374.5 862.5,375.5 863.5,375.5 863.5,375.5 864.5,373.5 864.5,373.5 865.5,375.5 865.5,375.5 866.5,374.5 866.5,373.5 867.5,372.5 867.5,375.5 868.5,374.5 868.5,374.5 869.5,373.5 869.5,375.5 870.5,375.5 870.5,375.5 871.5,372.5 871.5,375.5 872.5,374.5 872.5,375.5 873.5,375.5 873.5,376.5 874.5,374.5 874.5,375.5 875.5,374.5 875.5,375.5 876.5,375.5 876.5,374.5 877.5,375.5 877.5,375.5 878.5,376.5 878.5,376.5 879.5,372.5 879.5,375.5 880.5,375.5 880.5,375.5 881.5,374.5 881.5,371.5 882.5,375.5 882.5,372.5 883.5,374.5 883.5,368.5 884.5,373.5 884.5,375.5 885.5,375.5 885.5,374.5 886.5,373.5 886.5,374.5 887.5,375.5 887.5,372.5 888.5,372.5 888.5,371.5 889.5,374.5 889.5,372.5 890.5,373.5 890.5,375.5 891.5,376.5 891.5,375.5 892.5,375.5 892.5,375.5 893.5,375.5 893.5,373.5 894.5,375.5 894.5,374.5 895.5,376.5 895.5,375.5 896.5,371.5 896.5,376.5 897.5,374.5 897.5,372.5 898.5,372.5 898.5,368.5 899.5,375.5 899.5,375.5 900.5,372.5 900.5,373.5 901.5,371.5 901.5,375.5 902.5,371.5 902.5,374.5 903.5,373.5 903.5,375.5 904.5,371.5 904.5,375.5 905.5,373.5 905.5,375.5 906.5,374.5 906.5,374.5 907.5,373.5 907.5,371.5 908.5,374.5 908.5,373.5 909.5,374.5 909.5,375.5 910.5,370.5 910.5,374.5 911.5,375.5 911.5,374.5 912.5,371.5 912.5,375.5 913.5,370.5 913.5,372.5 914.5,370.5 914.5,374.5 915.5,375.5 915.5,374.5 916.5,373.5 916.5,372.5 917.5,366.5 917.5,314.5 918.5,372.5 918.5,373.5 919.5,367.5 919.5,365.5 920.5,374.5 920.5,362.5 921.5,373.5 921.5,375.5 922.5,374.5 922.5,365.5 923.5,373.5 923.5,367.5 924.5,375.5 924.5,374.5 925.5,372.5 925.5,375.5 926.5,375.5 926.5,372.5 927.5,369.5 927.5,374.5 928.5,375.5 928.5,374.5 929.5,369.5 929.5,375.5 930.5,372.5 930.5,374.5 931.5,372.5 931.5,375.5 932.5,372.5 932.5,370.5 933.5,370.5 933.5,372.5 934.5,373.5 934.5,373.5 935.5,375.5 935.5,370.5 936.5,372.5 936.5,373.5 937.5,372.5 937.5,374.5 938.5,374.5 938.5,375.5 939.5,372.5 939.5,373.5 940.5,373.5 940.5,375.5 941.5,372.5 941.5,373.5 942.5,372.5 942.5,372.5 943.5,369.5 943.5,375.5 944.5,373.5 944.5,368.5 945.5,371.5 945.5,374.5 946.5,371.5 946.5,368.5 947.5,374.5 947.5,369.5 948.5,375.5 948.5,368.5 949.5,373.5 949.5,374.5 950.5,369.5 950.5,363.5 951.5,368.5 951.5,375.5 952.5,370.5 952.5,373.5 953.5,367.5 953.5,375.5 954.5,368.5 954.5,370.5 955.5,374.5 955.5,369.5 956.5,373.5 956.5,372.5 957.5,368.5 957.5,374.5 958.5,374.5 958.5,363.5 959.5,375.5 959.5,375.5 960.5,369.5 960.5,372.5 961.5,374.5 961.5,369.5 962.5,368.5 962.5,370.5 963.5,372.5 963.5,368.5 964.5,370.5 964.5,375.5 965.5,374.5 965.5,375.5 966.5,375.5 966.5,374.5 967.5,369.5 967.5,370.5 968.5,375.5 968.5,375.5 969.5,374.5 969.5,370.5 970.5,372.5 970.5,369.5 971.5,375.5 971.5,368.5 972.5,375.5 972.5,372.5 973.5,370.5 973.5,371.5 974.5,375.5 974.5,372.5 975.5,374.5 975.5,375.5 976.5,374.5 976.5,374.5 977.5,372.5 977.5,374.5 978.5,372.5 978.5,371.5 979.5,375.5 979.5,375.5 980.5,371.5 980.5,373.5 981.5,375.5 981.5,375.5 982.5,367.5 982.5,371.5 983.5,373.5 983.5,374.5 984.5,365.5 984.5,370.5 985.5,369.5 985.5,373.5 986.5,374.5 986.5,373.5 987.5,375.5 987.5,370.5 988.5,373.5 988.5,368.5 989.5,373.5 989.5,372.5 990.5,372.5 990.5,366.5 991.5,373.5 991.5,369.5 992.5,374.5 992.5,371.5 993.5,374.5 993.5,367.5 994.5,374.5 994.5,367.5 995.5,369.5 995.5,372.5 996.5,366.5 996.5,373.5 997.5,368.5 997.5,370.5 998.5,372.5 998.5,375.5 999.5,372.5 999.5,374.5 1000.5,372.5 1000.5,365.5 1001.5,373.5 1001.5,369.5 1002.5,369.5 1002.5,374.5 1003.5,373.5 1003.5,374.5 1004.5,367.5 1004.5,374.5 1005.5,373.5 1005.5,373.5 1006.5,369.5 1006.5,369.5 1007.5,372.5 1007.5,372.5 1008.5,375.5 1008.5,369.5 1009.5,375.5 1009.5,374.5 1010.5,374.5 1010.5,372.5 1011.5,372.5 1011.5,374.5 1012.5,370.5 1012.5,370.5 1013.5,375.5 1013.5,372.5 1014.5,374.5 1014.5,374.5 1015.5,374.5 1015.5,374.5 1016.5,372.5 1016.5,373.5 1017.5,369.5 1017.5,369.5 1018.5,369.5 1018.5,374.5 1019.5,371.5 1019.5,372.5 1020.5,372.5 1020.5,369.5 1021.5,375.5 1021.5,374.5 1022.5,374.5 1022.5,372.5 1023.5,375.5 1023.5,369.5 1024.5,375.5 1024.5,374.5 1025.5,375.5 1025.5,374.5 1026.5,372.5 1026.5,375.5 1027.5,375.5 1027.5,372.5 1028.5,372.5 1028.5,372.5 1029.5,375.5 1029.5,371.5 1030.5,372.5 1030.5,371.5 1031.5,375.5 1031.5,374.5 1032.5,375.5 1032.5,370.5 1033.5,370.5 1033.5,370.5 1034.5,375.5 1034.5,374.5 1035.5,373.5 1035.5,373.5 1036.5,375.5 1036.5,371.5 1037.5,374.5 1037.5,373.5 1038.5,375.5 1038.5,373.5 1039.5,375.5 1039.5,375.5 1040.5,373.5 1040.5,375.5 1041.5,371.5 1041.5,375.5 1042.5,374.5 1042.5,375.5 1043.5,375.5 1043.5,374.5 1044.5,373.5 1044.5,374.5 1045.5,371.5 1045.5,375.5 1046.5,372.5 1046.5,375.5 1047.5,371.5 1047.5,374.5 1048.5,374.5 1048.5,373.5 1049.5,372.5 1049.5,371.5 1050.5,374.5 1050.5,365.5 1051.5,375.5 1051.5,375.5 1052.5,373.5 1052.5,373.5 1053.5,375.5 1053.5,374.5 1054.5,376.5 1054.5,375.5 1055.5,375.5 1055.5,371.5 1056.5,373.5 1056.5,372.5 1057.5,375.5 1057.5,375.5 1058.5,375.5 1058.5,375.5 1059.5,375.5 1059.5,372.5 1060.5,375.5 1060.5,374.5 1061.5,373.5 1061.5,372.5 1062.5,372.5 1062.5,374.5 1063.5,374.5 1063.5,372.5 1064.5,375.5 1064.5,375.5 1065.5,373.5 1065.5,375.5 1066.5,375.5 1066.5,375.5 1067.5,374.5 1067.5,375.5 1068.5,375.5 1068.5,374.5 1069.5,376.5 1069.5,373.5 1070.5,376.5 1070.5,374.5 1071.5,374.5 1071.5,375.5 1072.5,375.5 1072.5,375.5 1073.5,375.5 1073.5,375.5 1074.5,374.5 1074.5,375.5 1075.5,373.5 1075.5,374.5 1076.5,376.5 1076.5,375.5 1077.5,372.5 1077.5,376.5 1078.5,374.5 1078.5,372.5 1079.5,375.5 1079.5,374.5 1080.5,375.5 1080.5,375.5 1081.5,374.5 1081.5,374.5 1082.5,375.5 1082.5,374.5 1083.5,374.5 1083.5,373.5 1084.5,376.5 1084.5,376.5 1085.5,375.5 1085.5,375.5 1086.5,373.5 1086.5,375.5 1087.5,373.5 1087.5,375.5 1088.5,375.5 1088.5,374.5"/></svg><span class="t" style="left:541.00px;top:89px;font-size:21.33px;font-weight:bold;transform:scaleX(0.9854);">Compressor</span><span class="t" style="left:98.48px;top:371px;font-size:10.67px;">0</span><span class="t" style="left:62.87px;top:347px;font-size:10.67px;">5000000</span><span class="t" style="left:56.92px;top:322px;font-size:10.67px;">10000000</span><span class="t" style="left:56.92px;top:298px;font-size:10.67px;">15000000</span><span class="t" style="left:56.92px;top:274px;font-size:10.67px;">20000000</span><span class="t" style="left:56.92px;top:249px;font-size:10.67px;">25000000</span><span class="t" style="left:56.92px;top:225px;font-size:10.67px;">30000000</span><span class="t" style="left:56.92px;top:201px;font-size:10.67px;">35000000</span><span class="t" style="left:56.92px;top:177px;font-size:10.67px;">40000000</span><span class="t" style="left:56.92px;top:152px;font-size:10.67px;">45000000</span><span class="t" style="left:56.92px;top:128px;font-size:10.67px;">50000000</span><span class="t" style="left:111.57px;top:416px;font-size:10.67px;transform:scaleX(0.9750);">0.0</span><span class="t" style="left:155.57px;top:416px;font-size:10.67px;transform:scaleX(0.9750);">1.0</span><span class="t" style="left:199.57px;top:416px;font-size:10.67px;transform:scaleX(0.9750);">2.0</span><span class="t" style="left:243.57px;top:416px;font-size:10.67px;transform:scaleX(0.9750);">3.0</span><span class="t" style="left:287.57px;top:416px;font-size:10.67px;transform:scaleX(0.9750);">4.0</span><span class="t" style="left:331.57px;top:416px;font-size:10.67px;transform:scaleX(0.9750);">5.0</span><span class="t" style="left:375.57px;top:416px;font-size:10.67px;transform:scaleX(0.9750);">6.0</span><span class="t" style="left:419.57px;top:416px;font-size:10.67px;transform:scaleX(0.9750);">7.0</span><span class="t" style="left:463.57px;top:416px;font-size:10.67px;transform:scaleX(0.9750);">8.0</span><span class="t" style="left:507.57px;top:416px;font-size:10.67px;transform:scaleX(0.9750);">9.0</span><span class="t" style="left:548.67px;top:416px;font-size:10.67px;transform:scaleX(0.9750);">10.0</span><span class="t" style="left:593.06px;top:416px;font-size:10.67px;transform:scaleX(0.9750);">11.0</span><span class="t" style="left:636.67px;top:416px;font-size:10.67px;transform:scaleX(0.9750);">12.0</span><span class="t" style="left:680.67px;top:416px;font-size:10.67px;transform:scaleX(0.9750);">13.0</span><span class="t" style="left:724.67px;top:416px;font-size:10.67px;transform:scaleX(0.9750);">14.0</span><span class="t" style="left:768.67px;top:416px;font-size:10.67px;transform:scaleX(0.9750);">15.0</span><span class="t" style="left:812.67px;top:416px;font-size:10.67px;transform:scaleX(0.9750);">16.0</span><span class="t" style="left:856.67px;top:416px;font-size:10.67px;transform:scaleX(0.9750);">17.0</span><span class="t" style="left:900.67px;top:416px;font-size:10.67px;transform:scaleX(0.9750);">18.0</span><span class="t" style="left:944.67px;top:416px;font-size:10.67px;transform:scaleX(0.9750);">19.0</span><span class="t" style="left:988.67px;top:416px;font-size:10.67px;transform:scaleX(0.9750);">20.0</span><span class="t" style="left:1032.67px;top:416px;font-size:10.67px;transform:scaleX(0.9750);">21.0</span><span class="t" style="left:1076.67px;top:416px;font-size:10.67px;transform:scaleX(0.9750);">22.0</span><span class="t" style="left:592.40px;top:432px;font-size:13.75px;font-weight:bold;transform:scaleX(0.9329);">kHz</span><span class="t" style="left:46.6px;top:262.0px;width:0;height:0;"><span class="t" style="left:0;top:0;transform-origin:50% 50%;transform:translate(-50%,-50%) rotate(-90deg) scaleX(0.9385);font-size:13.8px;font-weight:bold;">(mm/sec^2)^2 / Hz</span></span><span class="t" style="left:1093.00px;top:120px;font-size:13.75px;font-weight:bold;transform:scaleX(0.9535);">Channels</span><div class="abs" style="left:1095px;top:142px;width:13px;height:3px;background:#7fff00"></div><span class="t" style="left:1112.00px;top:138px;font-size:10.67px;">Ch1</span><svg width="1235" height="305" viewBox="0 493 1235 305" style="top:493px"><g shape-rendering="crispEdges" fill="none" stroke-width="1"><path stroke="#008000" d="M118 759.5H1089M118 736.5H1089M118 714.5H1089M118 691.5H1089M118 668.5H1089M118 645.5H1089M118 622.5H1089M118 599.5H1089M118 576.5H1089M118 553.5H1089M118 530.5H1089M118 508.5H1089M118 495.5H1089M118 780.5H1089M162.5 495V781M206.5 495V781M250.5 495V781M294.5 495V781M338.5 495V781M382.5 495V781M426.5 495V781M470.5 495V781M514.5 495V781M558.5 495V781M602.5 495V781M646.5 495V781M690.5 495V781M734.5 495V781M778.5 495V781M822.5 495V781M866.5 495V781M910.5 495V781M954.5 495V781M998.5 495V781M1042.5 495V781M1086.5 495V781M1088.5 495V781"/><path stroke="#fff" d="M113.5 495V781M118.5 495V781M118 759.5H1089M118 786.5H1089M107 759.5H114M107 736.5H114M107 714.5H114M107 691.5H114M107 668.5H114M107 645.5H114M107 622.5H114M107 599.5H114M107 576.5H114M107 553.5H114M107 530.5H114M107 508.5H114M118.5 786V793M162.5 786V793M206.5 786V793M250.5 786V793M294.5 786V793M338.5 786V793M382.5 786V793M426.5 786V793M470.5 786V793M514.5 786V793M558.5 786V793M602.5 786V793M646.5 786V793M690.5 786V793M734.5 786V793M778.5 786V793M822.5 786V793M866.5 786V793M910.5 786V793M954.5 786V793M998.5 786V793M1042.5 786V793M1086.5 786V793"/></g><polyline fill="none" stroke="#00ff00" stroke-width="1" stroke-linejoin="bevel" stroke-linecap="square" shape-rendering="crispEdges" points="118.5,758.5 118.5,758.5 119.5,758.5 119.5,759.5 120.5,759.5 120.5,759.5 121.5,759.5 121.5,759.5 122.5,759.5 122.5,759.5 123.5,759.5 123.5,759.5 124.5,759.5 124.5,759.5 125.5,758.5 125.5,759.5 126.5,759.5 126.5,758.5 127.5,759.5 127.5,759.5 128.5,758.5 128.5,758.5 129.5,758.5 129.5,758.5 130.5,758.5 130.5,759.5 131.5,758.5 131.5,759.5 132.5,758.5 132.5,758.5 133.5,759.5 133.5,759.5 134.5,759.5 134.5,758.5 135.5,758.5 135.5,759.5 136.5,758.5 136.5,759.5 137.5,759.5 137.5,759.5 138.5,758.5 138.5,759.5 139.5,759.5 139.5,759.5 140.5,759.5 140.5,759.5 141.5,758.5 141.5,758.5 142.5,759.5 142.5,759.5 143.5,759.5 143.5,759.5 144.5,758.5 144.5,758.5 145.5,759.5 145.5,759.5 146.5,757.5 146.5,757.5 147.5,756.5 147.5,758.5 148.5,757.5 148.5,755.5 149.5,756.5 149.5,753.5 150.5,758.5 150.5,750.5 151.5,747.5 151.5,686.5 152.5,754.5 152.5,754.5 153.5,749.5 153.5,750.5 154.5,754.5 154.5,753.5 155.5,757.5 155.5,754.5 156.5,755.5 156.5,757.5 157.5,751.5 157.5,757.5 158.5,757.5 158.5,758.5 159.5,754.5 159.5,757.5 160.5,746.5 160.5,736.5 161.5,757.5 161.5,757.5 162.5,754.5 162.5,757.5 163.5,755.5 163.5,753.5 164.5,758.5 164.5,757.5 165.5,754.5 165.5,757.5 166.5,758.5 166.5,755.5 167.5,756.5 167.5,756.5 168.5,757.5 168.5,758.5 169.5,757.5 169.5,757.5 170.5,758.5 170.5,759.5 171.5,759.5 171.5,758.5 172.5,758.5 172.5,758.5 173.5,758.5 173.5,758.5 174.5,759.5 174.5,758.5 175.5,759.5 175.5,758.5 176.5,758.5 176.5,759.5 177.5,757.5 177.5,759.5 178.5,758.5 178.5,758.5 179.5,759.5 179.5,758.5 180.5,758.5 180.5,758.5 181.5,758.5 181.5,759.5 182.5,758.5 182.5,757.5 183.5,758.5 183.5,754.5 184.5,758.5 184.5,755.5 185.5,750.5 185.5,704.5 186.5,755.5 186.5,757.5 187.5,751.5 187.5,756.5 188.5,756.5 188.5,757.5 189.5,758.5 189.5,758.5 190.5,759.5 190.5,758.5 191.5,759.5 191.5,758.5 192.5,758.5 192.5,758.5 193.5,758.5 193.5,758.5 194.5,758.5 194.5,759.5 195.5,759.5 195.5,759.5 196.5,759.5 196.5,758.5 197.5,759.5 197.5,759.5 198.5,759.5 198.5,758.5 199.5,759.5 199.5,759.5 200.5,759.5 200.5,759.5 201.5,759.5 201.5,759.5 202.5,759.5 202.5,758.5 203.5,759.5 203.5,759.5 204.5,759.5 204.5,759.5 205.5,759.5 205.5,759.5 206.5,758.5 206.5,759.5 207.5,758.5 207.5,759.5 208.5,758.5 208.5,758.5 209.5,759.5 209.5,758.5 210.5,759.5 210.5,759.5 211.5,759.5 211.5,758.5 212.5,759.5 212.5,758.5 213.5,759.5 213.5,758.5 214.5,759.5 214.5,759.5 215.5,757.5 215.5,758.5 216.5,758.5 216.5,756.5 217.5,756.5 217.5,758.5 218.5,759.5 218.5,757.5 219.5,759.5 219.5,757.5 220.5,758.5 220.5,757.5 221.5,758.5 221.5,757.5 222.5,756.5 222.5,757.5 223.5,757.5 223.5,758.5 224.5,758.5 224.5,758.5 225.5,755.5 225.5,758.5 226.5,757.5 226.5,758.5 227.5,757.5 227.5,744.5 228.5,755.5 228.5,758.5 229.5,757.5 229.5,757.5 230.5,758.5 230.5,758.5 231.5,759.5 231.5,758.5 232.5,758.5 232.5,758.5 233.5,759.5 233.5,759.5 234.5,758.5 234.5,758.5 235.5,759.5 235.5,759.5 236.5,758.5 236.5,758.5 237.5,759.5 237.5,759.5 238.5,759.5 238.5,759.5 239.5,759.5 239.5,759.5 240.5,758.5 240.5,758.5 241.5,759.5 241.5,759.5 242.5,759.5 242.5,758.5 243.5,758.5 243.5,759.5 244.5,757.5 244.5,758.5 245.5,755.5 245.5,757.5 246.5,756.5 246.5,757.5 247.5,756.5 247.5,754.5 248.5,753.5 248.5,756.5 249.5,757.5 249.5,758.5 250.5,753.5 250.5,750.5 251.5,757.5 251.5,758.5 252.5,758.5 252.5,757.5 253.5,752.5 253.5,754.5 254.5,755.5 254.5,755.5 255.5,758.5 255.5,758.5 256.5,756.5 256.5,758.5 257.5,756.5 257.5,757.5 258.5,757.5 258.5,758.5 259.5,758.5 259.5,757.5 260.5,758.5 260.5,757.5 261.5,758.5 261.5,757.5 262.5,757.5 262.5,758.5 263.5,758.5 263.5,759.5 264.5,758.5 264.5,756.5 265.5,758.5 265.5,758.5 266.5,758.5 266.5,758.5 267.5,757.5 267.5,758.5 268.5,756.5 268.5,759.5 269.5,756.5 269.5,757.5 270.5,755.5 270.5,758.5 271.5,756.5 271.5,754.5 272.5,755.5 272.5,758.5 273.5,752.5 273.5,751.5 274.5,758.5 274.5,751.5 275.5,758.5 275.5,758.5 276.5,750.5 276.5,751.5 277.5,745.5 277.5,751.5 278.5,752.5 278.5,756.5 279.5,750.5 279.5,740.5 280.5,748.5 280.5,742.5 281.5,755.5 281.5,744.5 282.5,744.5 282.5,756.5 283.5,741.5 283.5,735.5 284.5,755.5 284.5,757.5 285.5,746.5 285.5,756.5 286.5,737.5 286.5,757.5 287.5,743.5 287.5,745.5 288.5,750.5 288.5,750.5 289.5,746.5 289.5,750.5 290.5,757.5 290.5,747.5 291.5,755.5 291.5,752.5 292.5,754.5 292.5,748.5 293.5,755.5 293.5,750.5 294.5,758.5 294.5,756.5 295.5,753.5 295.5,754.5 296.5,751.5 296.5,757.5 297.5,752.5 297.5,752.5 298.5,758.5 298.5,758.5 299.5,755.5 299.5,750.5 300.5,755.5 300.5,756.5 301.5,755.5 301.5,752.5 302.5,755.5 302.5,755.5 303.5,755.5 303.5,751.5 304.5,752.5 304.5,752.5 305.5,757.5 305.5,754.5 306.5,752.5 306.5,753.5 307.5,750.5 307.5,750.5 308.5,758.5 308.5,755.5 309.5,756.5 309.5,757.5 310.5,755.5 310.5,749.5 311.5,752.5 311.5,758.5 312.5,757.5 312.5,756.5 313.5,750.5 313.5,755.5 314.5,757.5 314.5,754.5 315.5,757.5 315.5,758.5 316.5,753.5 316.5,747.5 317.5,751.5 317.5,751.5 318.5,750.5 318.5,702.5 319.5,752.5 319.5,755.5 320.5,751.5 320.5,757.5 321.5,745.5 321.5,756.5 322.5,749.5 322.5,753.5 323.5,747.5 323.5,755.5 324.5,757.5 324.5,754.5 325.5,753.5 325.5,746.5 326.5,754.5 326.5,749.5 327.5,754.5 327.5,747.5 328.5,756.5 328.5,743.5 329.5,741.5 329.5,757.5 330.5,743.5 330.5,745.5 331.5,746.5 331.5,756.5 332.5,745.5 332.5,744.5 333.5,747.5 333.5,737.5 334.5,736.5 334.5,746.5 335.5,736.5 335.5,756.5 336.5,753.5 336.5,748.5 337.5,748.5 337.5,733.5 338.5,744.5 338.5,744.5 339.5,743.5 339.5,730.5 340.5,749.5 340.5,712.5 341.5,742.5 341.5,756.5 342.5,750.5 342.5,754.5 343.5,755.5 343.5,749.5 344.5,749.5 344.5,695.5 345.5,743.5 345.5,755.5 346.5,721.5 346.5,729.5 347.5,735.5 347.5,725.5 348.5,748.5 348.5,688.5 349.5,737.5 349.5,754.5 350.5,715.5 350.5,745.5 351.5,721.5 351.5,624.5 352.5,750.5 352.5,750.5 353.5,733.5 353.5,751.5 354.5,721.5 354.5,718.5 355.5,735.5 355.5,719.5 356.5,721.5 356.5,754.5 357.5,736.5 357.5,736.5 358.5,738.5 358.5,751.5 359.5,746.5 359.5,744.5 360.5,736.5 360.5,756.5 361.5,752.5 361.5,753.5 362.5,742.5 362.5,756.5 363.5,757.5 363.5,756.5 364.5,757.5 364.5,753.5 365.5,744.5 365.5,754.5 366.5,757.5 366.5,749.5 367.5,755.5 367.5,751.5 368.5,749.5 368.5,754.5 369.5,749.5 369.5,751.5 370.5,748.5 370.5,749.5 371.5,748.5 371.5,750.5 372.5,756.5 372.5,754.5 373.5,750.5 373.5,750.5 374.5,751.5 374.5,749.5 375.5,749.5 375.5,754.5 376.5,752.5 376.5,758.5 377.5,754.5 377.5,751.5 378.5,748.5 378.5,749.5 379.5,755.5 379.5,757.5 380.5,748.5 380.5,752.5 381.5,755.5 381.5,731.5 382.5,748.5 382.5,757.5 383.5,755.5 383.5,746.5 384.5,753.5 384.5,750.5 385.5,749.5 385.5,756.5 386.5,754.5 386.5,757.5 387.5,752.5 387.5,755.5 388.5,749.5 388.5,757.5 389.5,757.5 389.5,755.5 390.5,758.5 390.5,755.5 391.5,746.5 391.5,748.5 392.5,755.5 392.5,737.5 393.5,757.5 393.5,757.5 394.5,752.5 394.5,756.5 395.5,757.5 395.5,758.5 396.5,757.5 396.5,757.5 397.5,749.5 397.5,758.5 398.5,755.5 398.5,757.5 399.5,753.5 399.5,758.5 400.5,756.5 400.5,753.5 401.5,758.5 401.5,756.5 402.5,757.5 402.5,755.5 403.5,754.5 403.5,758.5 404.5,751.5 404.5,757.5 405.5,752.5 405.5,758.5 406.5,758.5 406.5,757.5 407.5,758.5 407.5,757.5 408.5,758.5 408.5,758.5 409.5,751.5 409.5,755.5 410.5,755.5 410.5,755.5 411.5,751.5 411.5,758.5 412.5,758.5 412.5,753.5 413.5,758.5 413.5,754.5 414.5,752.5 414.5,748.5 415.5,757.5 415.5,755.5 416.5,755.5 416.5,752.5 417.5,757.5 417.5,748.5 418.5,744.5 418.5,693.5 419.5,750.5 419.5,754.5 420.5,747.5 420.5,747.5 421.5,754.5 421.5,757.5 422.5,750.5 422.5,749.5 423.5,752.5 423.5,756.5 424.5,747.5 424.5,753.5 425.5,755.5 425.5,733.5 426.5,757.5 426.5,757.5 427.5,747.5 427.5,758.5 428.5,748.5 428.5,755.5 429.5,753.5 429.5,751.5 430.5,748.5 430.5,757.5 431.5,757.5 431.5,754.5 432.5,757.5 432.5,755.5 433.5,757.5 433.5,757.5 434.5,750.5 434.5,757.5 435.5,754.5 435.5,752.5 436.5,756.5 436.5,739.5 437.5,731.5 437.5,756.5 438.5,732.5 438.5,718.5 439.5,733.5 439.5,756.5 440.5,731.5 440.5,706.5 441.5,751.5 441.5,755.5 442.5,748.5 442.5,705.5 443.5,729.5 443.5,755.5 444.5,722.5 444.5,731.5 445.5,719.5 445.5,718.5 446.5,753.5 446.5,732.5 447.5,755.5 447.5,752.5 448.5,742.5 448.5,713.5 449.5,752.5 449.5,756.5 450.5,745.5 450.5,724.5 451.5,743.5 451.5,743.5 452.5,739.5 452.5,754.5 453.5,739.5 453.5,740.5 454.5,741.5 454.5,751.5 455.5,750.5 455.5,757.5 456.5,753.5 456.5,749.5 457.5,744.5 457.5,745.5 458.5,755.5 458.5,749.5 459.5,748.5 459.5,746.5 460.5,751.5 460.5,756.5 461.5,748.5 461.5,758.5 462.5,754.5 462.5,755.5 463.5,749.5 463.5,753.5 464.5,757.5 464.5,757.5 465.5,758.5 465.5,752.5 466.5,752.5 466.5,756.5 467.5,757.5 467.5,755.5 468.5,758.5 468.5,755.5 469.5,757.5 469.5,757.5 470.5,754.5 470.5,757.5 471.5,757.5 471.5,756.5 472.5,752.5 472.5,758.5 473.5,757.5 473.5,758.5 474.5,757.5 474.5,756.5 475.5,754.5 475.5,758.5 476.5,755.5 476.5,757.5 477.5,756.5 477.5,757.5 478.5,756.5 478.5,758.5 479.5,756.5 479.5,757.5 480.5,755.5 480.5,756.5 481.5,757.5 481.5,754.5 482.5,758.5 482.5,759.5 483.5,758.5 483.5,756.5 484.5,757.5 484.5,747.5 485.5,758.5 485.5,758.5 486.5,757.5 486.5,759.5 487.5,758.5 487.5,755.5 488.5,757.5 488.5,758.5 489.5,756.5 489.5,757.5 490.5,756.5 490.5,758.5 491.5,758.5 491.5,757.5 492.5,757.5 492.5,757.5 493.5,759.5 493.5,758.5 494.5,758.5 494.5,758.5 495.5,759.5 495.5,757.5 496.5,759.5 496.5,758.5 497.5,759.5 497.5,757.5 498.5,757.5 498.5,759.5 499.5,756.5 499.5,756.5 500.5,757.5 500.5,757.5 501.5,757.5 501.5,759.5 502.5,758.5 502.5,758.5 503.5,759.5 503.5,757.5 504.5,757.5 504.5,758.5 505.5,757.5 505.5,758.5 506.5,758.5 506.5,759.5 507.5,758.5 507.5,756.5 508.5,758.5 508.5,757.5 509.5,756.5 509.5,757.5 510.5,758.5 510.5,755.5 511.5,758.5 511.5,757.5 512.5,754.5 512.5,756.5 513.5,757.5 513.5,754.5 514.5,754.5 514.5,755.5 515.5,758.5 515.5,755.5 516.5,755.5 516.5,747.5 517.5,726.5 517.5,553.5 518.5,745.5 518.5,751.5 519.5,730.5 519.5,758.5 520.5,756.5 520.5,757.5 521.5,753.5 521.5,757.5 522.5,755.5 522.5,755.5 523.5,758.5 523.5,757.5 524.5,758.5 524.5,758.5 525.5,758.5 525.5,757.5 526.5,757.5 526.5,758.5 527.5,757.5 527.5,757.5 528.5,757.5 528.5,758.5 529.5,756.5 529.5,757.5 530.5,757.5 530.5,757.5 531.5,758.5 531.5,758.5 532.5,757.5 532.5,758.5 533.5,759.5 533.5,758.5 534.5,759.5 534.5,759.5 535.5,758.5 535.5,758.5 536.5,758.5 536.5,758.5 537.5,758.5 537.5,758.5 538.5,758.5 538.5,758.5 539.5,758.5 539.5,756.5 540.5,759.5 540.5,759.5 541.5,758.5 541.5,756.5 542.5,757.5 542.5,758.5 543.5,755.5 543.5,757.5 544.5,756.5 544.5,756.5 545.5,759.5 545.5,758.5 546.5,756.5 546.5,758.5 547.5,756.5 547.5,759.5 548.5,755.5 548.5,757.5 549.5,758.5 549.5,756.5 550.5,757.5 550.5,758.5 551.5,758.5 551.5,756.5 552.5,758.5 552.5,758.5 553.5,759.5 553.5,759.5 554.5,758.5 554.5,759.5 555.5,758.5 555.5,758.5 556.5,759.5 556.5,758.5 557.5,758.5 557.5,758.5 558.5,757.5 558.5,758.5 559.5,759.5 559.5,755.5 560.5,755.5 560.5,758.5 561.5,757.5 561.5,757.5 562.5,758.5 562.5,757.5 563.5,758.5 563.5,758.5 564.5,758.5 564.5,759.5 565.5,758.5 565.5,755.5 566.5,756.5 566.5,758.5 567.5,755.5 567.5,758.5 568.5,756.5 568.5,758.5 569.5,755.5 569.5,758.5 570.5,755.5 570.5,758.5 571.5,758.5 571.5,758.5 572.5,756.5 572.5,755.5 573.5,758.5 573.5,758.5 574.5,758.5 574.5,759.5 575.5,758.5 575.5,758.5 576.5,758.5 576.5,758.5 577.5,755.5 577.5,757.5 578.5,756.5 578.5,758.5 579.5,758.5 579.5,758.5 580.5,758.5 580.5,759.5 581.5,758.5 581.5,755.5 582.5,758.5 582.5,757.5 583.5,758.5 583.5,756.5 584.5,759.5 584.5,757.5 585.5,756.5 585.5,757.5 586.5,758.5 586.5,755.5 587.5,759.5 587.5,755.5 588.5,755.5 588.5,755.5 589.5,755.5 589.5,758.5 590.5,756.5 590.5,757.5 591.5,756.5 591.5,758.5 592.5,754.5 592.5,758.5 593.5,756.5 593.5,758.5 594.5,758.5 594.5,754.5 595.5,757.5 595.5,757.5 596.5,752.5 596.5,755.5 597.5,758.5 597.5,756.5 598.5,756.5 598.5,755.5 599.5,757.5 599.5,757.5 600.5,752.5 600.5,755.5 601.5,755.5 601.5,754.5 602.5,753.5 602.5,758.5 603.5,753.5 603.5,756.5 604.5,758.5 604.5,757.5 605.5,750.5 605.5,752.5 606.5,751.5 606.5,756.5 607.5,754.5 607.5,756.5 608.5,753.5 608.5,755.5 609.5,757.5 609.5,750.5 610.5,755.5 610.5,738.5 611.5,752.5 611.5,758.5 612.5,756.5 612.5,756.5 613.5,757.5 613.5,756.5 614.5,756.5 614.5,755.5 615.5,754.5 615.5,754.5 616.5,758.5 616.5,757.5 617.5,758.5 617.5,757.5 618.5,756.5 618.5,752.5 619.5,758.5 619.5,752.5 620.5,758.5 620.5,752.5 621.5,751.5 621.5,748.5 622.5,754.5 622.5,758.5 623.5,757.5 623.5,755.5 624.5,752.5 624.5,747.5 625.5,748.5 625.5,758.5 626.5,757.5 626.5,751.5 627.5,757.5 627.5,752.5 628.5,753.5 628.5,752.5 629.5,755.5 629.5,745.5 630.5,755.5 630.5,754.5 631.5,756.5 631.5,755.5 632.5,757.5 632.5,749.5 633.5,757.5 633.5,755.5 634.5,744.5 634.5,743.5 635.5,754.5 635.5,745.5 636.5,742.5 636.5,747.5 637.5,747.5 637.5,744.5 638.5,753.5 638.5,753.5 639.5,754.5 639.5,754.5 640.5,748.5 640.5,748.5 641.5,755.5 641.5,756.5 642.5,756.5 642.5,754.5 643.5,755.5 643.5,743.5 644.5,735.5 644.5,746.5 645.5,741.5 645.5,725.5 646.5,755.5 646.5,757.5 647.5,735.5 647.5,754.5 648.5,751.5 648.5,714.5 649.5,737.5 649.5,756.5 650.5,749.5 650.5,749.5 651.5,743.5 651.5,703.5 652.5,754.5 652.5,755.5 653.5,726.5 653.5,753.5 654.5,753.5 654.5,733.5 655.5,740.5 655.5,710.5 656.5,747.5 656.5,756.5 657.5,741.5 657.5,752.5 658.5,749.5 658.5,731.5 659.5,748.5 659.5,751.5 660.5,752.5 660.5,728.5 661.5,746.5 661.5,757.5 662.5,755.5 662.5,757.5 663.5,752.5 663.5,756.5 664.5,749.5 664.5,756.5 665.5,751.5 665.5,752.5 666.5,740.5 666.5,754.5 667.5,755.5 667.5,755.5 668.5,749.5 668.5,756.5 669.5,756.5 669.5,748.5 670.5,752.5 670.5,757.5 671.5,746.5 671.5,757.5 672.5,755.5 672.5,752.5 673.5,753.5 673.5,748.5 674.5,757.5 674.5,750.5 675.5,757.5 675.5,757.5 676.5,749.5 676.5,748.5 677.5,757.5 677.5,757.5 678.5,757.5 678.5,752.5 679.5,756.5 679.5,738.5 680.5,758.5 680.5,758.5 681.5,750.5 681.5,755.5 682.5,750.5 682.5,757.5 683.5,751.5 683.5,754.5 684.5,751.5 684.5,745.5 685.5,753.5 685.5,758.5 686.5,757.5 686.5,758.5 687.5,759.5 687.5,757.5 688.5,758.5 688.5,758.5 689.5,758.5 689.5,759.5 690.5,757.5 690.5,758.5 691.5,758.5 691.5,758.5 692.5,757.5 692.5,758.5 693.5,758.5 693.5,758.5 694.5,759.5 694.5,758.5 695.5,758.5 695.5,759.5 696.5,759.5 696.5,758.5 697.5,759.5 697.5,759.5 698.5,758.5 698.5,758.5 699.5,757.5 699.5,758.5 700.5,758.5 700.5,757.5 701.5,759.5 701.5,759.5 702.5,758.5 702.5,758.5 703.5,759.5 703.5,759.5 704.5,757.5 704.5,759.5 705.5,757.5 705.5,758.5 706.5,757.5 706.5,757.5 707.5,758.5 707.5,758.5 708.5,757.5 708.5,758.5 709.5,759.5 709.5,756.5 710.5,758.5 710.5,757.5 711.5,758.5 711.5,759.5 712.5,759.5 712.5,758.5 713.5,756.5 713.5,757.5 714.5,758.5 714.5,758.5 715.5,756.5 715.5,758.5 716.5,758.5 716.5,758.5 717.5,758.5 717.5,752.5 718.5,759.5 718.5,759.5 719.5,758.5 719.5,759.5 720.5,757.5 720.5,758.5 721.5,759.5 721.5,758.5 722.5,756.5 722.5,758.5 723.5,758.5 723.5,758.5 724.5,756.5 724.5,757.5 725.5,758.5 725.5,757.5 726.5,758.5 726.5,756.5 727.5,758.5 727.5,758.5 728.5,758.5 728.5,756.5 729.5,757.5 729.5,757.5 730.5,759.5 730.5,756.5 731.5,756.5 731.5,759.5 732.5,758.5 732.5,758.5 733.5,759.5 733.5,759.5 734.5,758.5 734.5,757.5 735.5,758.5 735.5,758.5 736.5,757.5 736.5,756.5 737.5,756.5 737.5,757.5 738.5,758.5 738.5,759.5 739.5,758.5 739.5,758.5 740.5,756.5 740.5,757.5 741.5,759.5 741.5,758.5 742.5,758.5 742.5,757.5 743.5,756.5 743.5,758.5 744.5,757.5 744.5,758.5 745.5,756.5 745.5,758.5 746.5,757.5 746.5,757.5 747.5,757.5 747.5,757.5 748.5,758.5 748.5,758.5 749.5,757.5 749.5,757.5 750.5,757.5 750.5,748.5 751.5,758.5 751.5,758.5 752.5,757.5 752.5,758.5 753.5,759.5 753.5,759.5 754.5,759.5 754.5,759.5 755.5,758.5 755.5,756.5 756.5,758.5 756.5,756.5 757.5,757.5 757.5,756.5 758.5,757.5 758.5,756.5 759.5,756.5 759.5,759.5 760.5,759.5 760.5,756.5 761.5,758.5 761.5,757.5 762.5,756.5 762.5,755.5 763.5,758.5 763.5,758.5 764.5,757.5 764.5,757.5 765.5,759.5 765.5,756.5 766.5,759.5 766.5,758.5 767.5,756.5 767.5,756.5 768.5,756.5 768.5,756.5 769.5,758.5 769.5,758.5 770.5,758.5 770.5,757.5 771.5,758.5 771.5,758.5 772.5,757.5 772.5,749.5 773.5,757.5 773.5,759.5 774.5,757.5 774.5,759.5 775.5,758.5 775.5,758.5 776.5,756.5 776.5,755.5 777.5,756.5 777.5,756.5 778.5,758.5 778.5,757.5 779.5,757.5 779.5,755.5 780.5,755.5 780.5,759.5 781.5,756.5 781.5,756.5 782.5,755.5 782.5,755.5 783.5,758.5 783.5,758.5 784.5,758.5 784.5,752.5 785.5,755.5 785.5,759.5 786.5,755.5 786.5,758.5 787.5,756.5 787.5,759.5 788.5,757.5 788.5,758.5 789.5,758.5 789.5,754.5 790.5,758.5 790.5,754.5 791.5,756.5 791.5,754.5 792.5,757.5 792.5,754.5 793.5,757.5 793.5,757.5 794.5,756.5 794.5,758.5 795.5,756.5 795.5,758.5 796.5,758.5 796.5,755.5 797.5,758.5 797.5,754.5 798.5,758.5 798.5,754.5 799.5,758.5 799.5,755.5 800.5,757.5 800.5,755.5 801.5,758.5 801.5,758.5 802.5,758.5 802.5,752.5 803.5,753.5 803.5,757.5 804.5,752.5 804.5,753.5 805.5,758.5 805.5,755.5 806.5,758.5 806.5,757.5 807.5,757.5 807.5,758.5 808.5,755.5 808.5,758.5 809.5,757.5 809.5,758.5 810.5,757.5 810.5,754.5 811.5,757.5 811.5,752.5 812.5,758.5 812.5,758.5 813.5,758.5 813.5,756.5 814.5,757.5 814.5,757.5 815.5,755.5 815.5,755.5 816.5,758.5 816.5,754.5 817.5,757.5 817.5,756.5 818.5,757.5 818.5,755.5 819.5,756.5 819.5,757.5 820.5,758.5 820.5,758.5 821.5,758.5 821.5,755.5 822.5,755.5 822.5,758.5 823.5,758.5 823.5,758.5 824.5,755.5 824.5,758.5 825.5,758.5 825.5,759.5 826.5,757.5 826.5,758.5 827.5,755.5 827.5,755.5 828.5,757.5 828.5,756.5 829.5,757.5 829.5,758.5 830.5,756.5 830.5,759.5 831.5,758.5 831.5,756.5 832.5,758.5 832.5,757.5 833.5,757.5 833.5,757.5 834.5,758.5 834.5,759.5 835.5,758.5 835.5,757.5 836.5,758.5 836.5,757.5 837.5,757.5 837.5,758.5 838.5,757.5 838.5,757.5 839.5,758.5 839.5,758.5 840.5,758.5 840.5,758.5 841.5,759.5 841.5,758.5 842.5,757.5 842.5,758.5 843.5,758.5 843.5,758.5 844.5,758.5 844.5,756.5 845.5,757.5 845.5,759.5 846.5,758.5 846.5,758.5 847.5,758.5 847.5,759.5 848.5,758.5 848.5,758.5 849.5,757.5 849.5,759.5 850.5,758.5 850.5,758.5 851.5,757.5 851.5,759.5 852.5,757.5 852.5,758.5 853.5,758.5 853.5,759.5 854.5,757.5 854.5,759.5 855.5,758.5 855.5,758.5 856.5,758.5 856.5,756.5 857.5,759.5 857.5,759.5 858.5,759.5 858.5,758.5 859.5,759.5 859.5,759.5 860.5,757.5 860.5,756.5 861.5,759.5 861.5,758.5 862.5,756.5 862.5,759.5 863.5,759.5 863.5,758.5 864.5,759.5 864.5,758.5 865.5,757.5 865.5,757.5 866.5,759.5 866.5,758.5 867.5,758.5 867.5,758.5 868.5,759.5 868.5,758.5 869.5,759.5 869.5,757.5 870.5,759.5 870.5,759.5 871.5,757.5 871.5,758.5 872.5,758.5 872.5,758.5 873.5,758.5 873.5,759.5 874.5,757.5 874.5,756.5 875.5,758.5 875.5,758.5 876.5,758.5 876.5,757.5 877.5,758.5 877.5,758.5 878.5,758.5 878.5,758.5 879.5,758.5 879.5,758.5 880.5,757.5 880.5,757.5 881.5,756.5 881.5,759.5 882.5,758.5 882.5,758.5 883.5,759.5 883.5,758.5 884.5,758.5 884.5,758.5 885.5,757.5 885.5,758.5 886.5,758.5 886.5,759.5 887.5,758.5 887.5,756.5 888.5,756.5 888.5,758.5 889.5,758.5 889.5,759.5 890.5,757.5 890.5,756.5 891.5,759.5 891.5,758.5 892.5,758.5 892.5,758.5 893.5,757.5 893.5,757.5 894.5,758.5 894.5,756.5 895.5,758.5 895.5,758.5 896.5,757.5 896.5,759.5 897.5,758.5 897.5,758.5 898.5,759.5 898.5,759.5 899.5,758.5 899.5,757.5 900.5,759.5 900.5,758.5 901.5,757.5 901.5,759.5 902.5,758.5 902.5,756.5 903.5,756.5 903.5,757.5 904.5,757.5 904.5,759.5 905.5,758.5 905.5,758.5 906.5,759.5 906.5,758.5 907.5,757.5 907.5,757.5 908.5,757.5 908.5,757.5 909.5,755.5 909.5,758.5 910.5,758.5 910.5,758.5 911.5,758.5 911.5,754.5 912.5,757.5 912.5,753.5 913.5,756.5 913.5,757.5 914.5,755.5 914.5,758.5 915.5,756.5 915.5,757.5 916.5,756.5 916.5,756.5 917.5,750.5 917.5,701.5 918.5,755.5 918.5,756.5 919.5,751.5 919.5,757.5 920.5,758.5 920.5,753.5 921.5,758.5 921.5,758.5 922.5,758.5 922.5,754.5 923.5,757.5 923.5,758.5 924.5,758.5 924.5,758.5 925.5,756.5 925.5,759.5 926.5,758.5 926.5,757.5 927.5,759.5 927.5,757.5 928.5,756.5 928.5,758.5 929.5,757.5 929.5,757.5 930.5,756.5 930.5,755.5 931.5,757.5 931.5,757.5 932.5,757.5 932.5,756.5 933.5,758.5 933.5,757.5 934.5,758.5 934.5,756.5 935.5,756.5 935.5,758.5 936.5,757.5 936.5,755.5 937.5,757.5 937.5,758.5 938.5,758.5 938.5,759.5 939.5,758.5 939.5,756.5 940.5,758.5 940.5,757.5 941.5,757.5 941.5,756.5 942.5,758.5 942.5,759.5 943.5,758.5 943.5,757.5 944.5,757.5 944.5,756.5 945.5,759.5 945.5,758.5 946.5,757.5 946.5,758.5 947.5,756.5 947.5,755.5 948.5,758.5 948.5,757.5 949.5,759.5 949.5,757.5 950.5,756.5 950.5,752.5 951.5,758.5 951.5,759.5 952.5,758.5 952.5,757.5 953.5,759.5 953.5,758.5 954.5,758.5 954.5,759.5 955.5,756.5 955.5,756.5 956.5,758.5 956.5,758.5 957.5,758.5 957.5,758.5 958.5,758.5 958.5,757.5 959.5,756.5 959.5,758.5 960.5,758.5 960.5,758.5 961.5,756.5 961.5,756.5 962.5,758.5 962.5,758.5 963.5,756.5 963.5,757.5 964.5,757.5 964.5,758.5 965.5,757.5 965.5,759.5 966.5,758.5 966.5,756.5 967.5,756.5 967.5,758.5 968.5,757.5 968.5,758.5 969.5,758.5 969.5,757.5 970.5,757.5 970.5,756.5 971.5,758.5 971.5,758.5 972.5,758.5 972.5,757.5 973.5,756.5 973.5,756.5 974.5,757.5 974.5,757.5 975.5,759.5 975.5,759.5 976.5,759.5 976.5,757.5 977.5,758.5 977.5,759.5 978.5,756.5 978.5,757.5 979.5,757.5 979.5,758.5 980.5,758.5 980.5,758.5 981.5,758.5 981.5,758.5 982.5,757.5 982.5,757.5 983.5,758.5 983.5,756.5 984.5,758.5 984.5,758.5 985.5,758.5 985.5,759.5 986.5,758.5 986.5,757.5 987.5,756.5 987.5,758.5 988.5,759.5 988.5,757.5 989.5,759.5 989.5,758.5 990.5,759.5 990.5,757.5 991.5,757.5 991.5,757.5 992.5,758.5 992.5,757.5 993.5,758.5 993.5,758.5 994.5,757.5 994.5,758.5 995.5,756.5 995.5,757.5 996.5,759.5 996.5,757.5 997.5,758.5 997.5,759.5 998.5,758.5 998.5,758.5 999.5,759.5 999.5,759.5 1000.5,757.5 1000.5,758.5 1001.5,757.5 1001.5,758.5 1002.5,757.5 1002.5,758.5 1003.5,759.5 1003.5,757.5 1004.5,758.5 1004.5,758.5 1005.5,757.5 1005.5,758.5 1006.5,759.5 1006.5,759.5 1007.5,757.5 1007.5,756.5 1008.5,758.5 1008.5,757.5 1009.5,756.5 1009.5,759.5 1010.5,758.5 1010.5,757.5 1011.5,757.5 1011.5,758.5 1012.5,757.5 1012.5,758.5 1013.5,758.5 1013.5,758.5 1014.5,758.5 1014.5,758.5 1015.5,759.5 1015.5,756.5 1016.5,757.5 1016.5,757.5 1017.5,757.5 1017.5,757.5 1018.5,758.5 1018.5,758.5 1019.5,758.5 1019.5,759.5 1020.5,756.5 1020.5,757.5 1021.5,757.5 1021.5,757.5 1022.5,758.5 1022.5,758.5 1023.5,759.5 1023.5,757.5 1024.5,758.5 1024.5,759.5 1025.5,756.5 1025.5,758.5 1026.5,759.5 1026.5,758.5 1027.5,758.5 1027.5,758.5 1028.5,759.5 1028.5,758.5 1029.5,757.5 1029.5,757.5 1030.5,758.5 1030.5,757.5 1031.5,758.5 1031.5,759.5 1032.5,759.5 1032.5,758.5 1033.5,756.5 1033.5,758.5 1034.5,756.5 1034.5,757.5 1035.5,756.5 1035.5,755.5 1036.5,757.5 1036.5,757.5 1037.5,756.5 1037.5,757.5 1038.5,758.5 1038.5,757.5 1039.5,759.5 1039.5,756.5 1040.5,759.5 1040.5,755.5 1041.5,756.5 1041.5,755.5 1042.5,756.5 1042.5,758.5 1043.5,757.5 1043.5,757.5 1044.5,758.5 1044.5,755.5 1045.5,758.5 1045.5,758.5 1046.5,757.5 1046.5,755.5 1047.5,757.5 1047.5,757.5 1048.5,756.5 1048.5,757.5 1049.5,758.5 1049.5,754.5 1050.5,757.5 1050.5,749.5 1051.5,758.5 1051.5,758.5 1052.5,758.5 1052.5,756.5 1053.5,758.5 1053.5,757.5 1054.5,754.5 1054.5,756.5 1055.5,753.5 1055.5,758.5 1056.5,754.5 1056.5,753.5 1057.5,758.5 1057.5,753.5 1058.5,758.5 1058.5,755.5 1059.5,758.5 1059.5,756.5 1060.5,756.5 1060.5,754.5 1061.5,758.5 1061.5,751.5 1062.5,758.5 1062.5,758.5 1063.5,758.5 1063.5,757.5 1064.5,756.5 1064.5,757.5 1065.5,754.5 1065.5,757.5 1066.5,757.5 1066.5,755.5 1067.5,758.5 1067.5,758.5 1068.5,756.5 1068.5,757.5 1069.5,758.5 1069.5,758.5 1070.5,756.5 1070.5,756.5 1071.5,758.5 1071.5,758.5 1072.5,759.5 1072.5,759.5 1073.5,758.5 1073.5,758.5 1074.5,757.5 1074.5,758.5 1075.5,758.5 1075.5,756.5 1076.5,759.5 1076.5,758.5 1077.5,758.5 1077.5,757.5 1078.5,755.5 1078.5,758.5 1079.5,758.5 1079.5,757.5 1080.5,756.5 1080.5,755.5 1081.5,756.5 1081.5,758.5 1082.5,758.5 1082.5,759.5 1083.5,759.5 1083.5,758.5 1084.5,758.5 1084.5,757.5 1085.5,755.5 1085.5,759.5 1086.5,755.5 1086.5,757.5 1087.5,758.5 1087.5,757.5 1088.5,759.5 1088.5,759.5"/></svg><span class="t" style="left:566.20px;top:461px;font-size:21.33px;font-weight:bold;transform:scaleX(0.9788);">Turbine</span><span class="t" style="left:98.48px;top:754px;font-size:10.67px;">0</span><span class="t" style="left:62.87px;top:731px;font-size:10.67px;">2500000</span><span class="t" style="left:62.87px;top:709px;font-size:10.67px;">5000000</span><span class="t" style="left:62.87px;top:686px;font-size:10.67px;">7500000</span><span class="t" style="left:56.92px;top:663px;font-size:10.67px;">10000000</span><span class="t" style="left:56.92px;top:640px;font-size:10.67px;">12500000</span><span class="t" style="left:56.92px;top:617px;font-size:10.67px;">15000000</span><span class="t" style="left:56.92px;top:594px;font-size:10.67px;">17500000</span><span class="t" style="left:56.92px;top:571px;font-size:10.67px;">20000000</span><span class="t" style="left:56.92px;top:548px;font-size:10.67px;">22500000</span><span class="t" style="left:56.92px;top:525px;font-size:10.67px;">25000000</span><span class="t" style="left:56.92px;top:503px;font-size:10.67px;">27500000</span><span class="t" style="left:111.57px;top:797px;font-size:10.67px;transform:scaleX(0.9750);">0.0</span><span class="t" style="left:155.57px;top:797px;font-size:10.67px;transform:scaleX(0.9750);">1.0</span><span class="t" style="left:199.57px;top:797px;font-size:10.67px;transform:scaleX(0.9750);">2.0</span><span class="t" style="left:243.57px;top:797px;font-size:10.67px;transform:scaleX(0.9750);">3.0</span><span class="t" style="left:287.57px;top:797px;font-size:10.67px;transform:scaleX(0.9750);">4.0</span><span class="t" style="left:331.57px;top:797px;font-size:10.67px;transform:scaleX(0.9750);">5.0</span><span class="t" style="left:375.57px;top:797px;font-size:10.67px;transform:scaleX(0.9750);">6.0</span><span class="t" style="left:419.57px;top:797px;font-size:10.67px;transform:scaleX(0.9750);">7.0</span><span class="t" style="left:463.57px;top:797px;font-size:10.67px;transform:scaleX(0.9750);">8.0</span><span class="t" style="left:507.57px;top:797px;font-size:10.67px;transform:scaleX(0.9750);">9.0</span><span class="t" style="left:548.67px;top:797px;font-size:10.67px;transform:scaleX(0.9750);">10.0</span><span class="t" style="left:593.06px;top:797px;font-size:10.67px;transform:scaleX(0.9750);">11.0</span><span class="t" style="left:636.67px;top:797px;font-size:10.67px;transform:scaleX(0.9750);">12.0</span><span class="t" style="left:680.67px;top:797px;font-size:10.67px;transform:scaleX(0.9750);">13.0</span><span class="t" style="left:724.67px;top:797px;font-size:10.67px;transform:scaleX(0.9750);">14.0</span><span class="t" style="left:768.67px;top:797px;font-size:10.67px;transform:scaleX(0.9750);">15.0</span><span class="t" style="left:812.67px;top:797px;font-size:10.67px;transform:scaleX(0.9750);">16.0</span><span class="t" style="left:856.67px;top:797px;font-size:10.67px;transform:scaleX(0.9750);">17.0</span><span class="t" style="left:900.67px;top:797px;font-size:10.67px;transform:scaleX(0.9750);">18.0</span><span class="t" style="left:944.67px;top:797px;font-size:10.67px;transform:scaleX(0.9750);">19.0</span><span class="t" style="left:988.67px;top:797px;font-size:10.67px;transform:scaleX(0.9750);">20.0</span><span class="t" style="left:1032.67px;top:797px;font-size:10.67px;transform:scaleX(0.9750);">21.0</span><span class="t" style="left:1076.67px;top:797px;font-size:10.67px;transform:scaleX(0.9750);">22.0</span><span class="t" style="left:592.40px;top:813px;font-size:13.75px;font-weight:bold;transform:scaleX(0.9329);">kHz</span><span class="t" style="left:46.6px;top:638.5px;width:0;height:0;"><span class="t" style="left:0;top:0;transform-origin:50% 50%;transform:translate(-50%,-50%) rotate(-90deg) scaleX(0.9385);font-size:13.8px;font-weight:bold;">(mm/sec^2)^2 / Hz</span></span><span class="t" style="left:1093.00px;top:492px;font-size:13.75px;font-weight:bold;transform:scaleX(0.9535);">Channels</span><div class="abs" style="left:1095px;top:514px;width:13px;height:3px;background:#00ff00"></div><span class="t" style="left:1112.00px;top:510px;font-size:10.67px;">Ch2</span><style>
.led{position:absolute;left:1082px;width:137px;height:28px;background:#000;overflow:hidden;}
.led .cell{position:absolute;left:0;top:0;width:117px;height:216px;transform-origin:0 0;}
.led i{position:absolute;display:block;background:#094005;border-radius:8px;}
.led .mn{left:2px;top:13px;width:7px;height:2px;background:#0b4c07;border-radius:1px;box-shadow:0 0 1px .3px #0a4406;}
.led .sa,.led .sg,.led .sd{left:15px;width:87px;height:19px;}
.led .sa.on,.led .sg.on,.led .sd.on{left:21px;width:75px;}
.led .sf,.led .sb,.led .se,.led .sc{width:19px;height:78px;}
.led .sa{top:0;}
.led .sg{top:98px;}
.led .sd{top:197px;}
.led .sf,.led .se{left:0;}
.led .sb,.led .sc{left:98px;}
.led .sf,.led .sb{top:21px;}
.led .se,.led .sc{top:118px;}
.led .sp{left:122px;top:198px;width:17px;height:17px;border-radius:50%;}
.led i.on{background:radial-gradient(ellipse at center,#c6f71a 0%,#86fb12 50%,#52f206 100%);box-shadow:0 0 10px 4px #34dc00,0 0 22px 6px rgba(24,132,0,.72);z-index:2;}
.led .ledtxt{position:absolute;left:40px;top:3px;width:96px;text-align:right;font:italic bold 22px/22px "Liberation Mono",monospace;letter-spacing:4.6px;color:transparent;white-space:nowrap;z-index:3;}
</style><span class="t" style="left:1107.00px;top:228px;font-size:14px;transform:scaleX(0.9839);">RMS (mm/S^2)</span><div class="led" style="top:247px"><i class="mn"></i><div class="cell" style="transform:translate(14.55px,3.25px) skewX(-4.8deg) scale(.1)"><i class="sa"></i><i class="sb"></i><i class="sc"></i><i class="sd"></i><i class="se"></i><i class="sf"></i><i class="sg"></i><i class="sp"></i></div><div class="cell" style="transform:translate(32.17px,3.25px) skewX(-4.8deg) scale(.1)"><i class="sa"></i><i class="sb"></i><i class="sc"></i><i class="sd"></i><i class="se"></i><i class="sf"></i><i class="sg"></i><i class="sp"></i></div><div class="cell" style="transform:translate(49.79px,3.25px) skewX(-4.8deg) scale(.1)"><i class="sa"></i><i class="sb on"></i><i class="sc on"></i><i class="sd"></i><i class="se"></i><i class="sf"></i><i class="sg"></i><i class="sp"></i></div><div class="cell" style="transform:translate(67.41px,3.25px) skewX(-4.8deg) scale(.1)"><i class="sa on"></i><i class="sb on"></i><i class="sc"></i><i class="sd on"></i><i class="se on"></i><i class="sf"></i><i class="sg on"></i><i class="sp"></i></div><div class="cell" style="transform:translate(85.03px,3.25px) skewX(-4.8deg) scale(.1)"><i class="sa on"></i><i class="sb on"></i><i class="sc on"></i><i class="sd on"></i><i class="se"></i><i class="sf on"></i><i class="sg on"></i><i class="sp"></i></div><div class="cell" style="transform:translate(102.65px,3.25px) skewX(-4.8deg) scale(.1)"><i class="sa on"></i><i class="sb"></i><i class="sc on"></i><i class="sd on"></i><i class="se on"></i><i class="sf on"></i><i class="sg on"></i><i class="sp"></i></div><div class="cell" style="transform:translate(120.27px,3.25px) skewX(-4.8deg) scale(.1)"><i class="sa on"></i><i class="sb on"></i><i class="sc"></i><i class="sd on"></i><i class="se on"></i><i class="sf"></i><i class="sg on"></i><i class="sp on"></i></div><span class="ledtxt">12962.</span></div><span class="t" style="left:1107.00px;top:286px;font-size:14px;transform:scaleX(0.9718);">RMS (mm/S)</span><div class="led" style="top:305px"><i class="mn"></i><div class="cell" style="transform:translate(14.55px,3.25px) skewX(-4.8deg) scale(.1)"><i class="sa"></i><i class="sb"></i><i class="sc"></i><i class="sd"></i><i class="se"></i><i class="sf"></i><i class="sg"></i><i class="sp"></i></div><div class="cell" style="transform:translate(32.17px,3.25px) skewX(-4.8deg) scale(.1)"><i class="sa"></i><i class="sb"></i><i class="sc"></i><i class="sd"></i><i class="se"></i><i class="sf"></i><i class="sg"></i><i class="sp"></i></div><div class="cell" style="transform:translate(49.79px,3.25px) skewX(-4.8deg) scale(.1)"><i class="sa"></i><i class="sb"></i><i class="sc"></i><i class="sd"></i><i class="se"></i><i class="sf"></i><i class="sg"></i><i class="sp"></i></div><div class="cell" style="transform:translate(67.41px,3.25px) skewX(-4.8deg) scale(.1)"><i class="sa"></i><i class="sb on"></i><i class="sc on"></i><i class="sd"></i><i class="se"></i><i class="sf"></i><i class="sg"></i><i class="sp on"></i></div><div class="cell" style="transform:translate(85.03px,3.25px) skewX(-4.8deg) scale(.1)"><i class="sa on"></i><i class="sb on"></i><i class="sc"></i><i class="sd on"></i><i class="se on"></i><i class="sf"></i><i class="sg on"></i><i class="sp"></i></div><div class="cell" style="transform:translate(102.65px,3.25px) skewX(-4.8deg) scale(.1)"><i class="sa on"></i><i class="sb on"></i><i class="sc"></i><i class="sd on"></i><i class="se on"></i><i class="sf"></i><i class="sg on"></i><i class="sp"></i></div><div class="cell" style="transform:translate(120.27px,3.25px) skewX(-4.8deg) scale(.1)"><i class="sa on"></i><i class="sb on"></i><i class="sc on"></i><i class="sd on"></i><i class="se on"></i><i class="sf on"></i><i class="sg"></i><i class="sp"></i></div><span class="ledtxt">1.220</span></div><span class="t" style="left:1107.00px;top:605px;font-size:14px;transform:scaleX(0.9839);">RMS (mm/S^2)</span><div class="led" style="top:623px"><i class="mn"></i><div class="cell" style="transform:translate(14.55px,3.25px) skewX(-4.8deg) scale(.1)"><i class="sa"></i><i class="sb"></i><i class="sc"></i><i class="sd"></i><i class="se"></i><i class="sf"></i><i class="sg"></i><i class="sp"></i></div><div class="cell" style="transform:translate(32.17px,3.25px) skewX(-4.8deg) scale(.1)"><i class="sa"></i><i class="sb"></i><i class="sc"></i><i class="sd"></i><i class="se"></i><i class="sf"></i><i class="sg"></i><i class="sp"></i></div><div class="cell" style="transform:translate(49.79px,3.25px) skewX(-4.8deg) scale(.1)"><i class="sa"></i><i class="sb on"></i><i class="sc on"></i><i class="sd"></i><i class="se"></i><i class="sf"></i><i class="sg"></i><i class="sp"></i></div><div class="cell" style="transform:translate(67.41px,3.25px) skewX(-4.8deg) scale(.1)"><i class="sa on"></i><i class="sb on"></i><i class="sc on"></i><i class="sd on"></i><i class="se on"></i><i class="sf on"></i><i class="sg"></i><i class="sp"></i></div><div class="cell" style="transform:translate(85.03px,3.25px) skewX(-4.8deg) scale(.1)"><i class="sa on"></i><i class="sb"></i><i class="sc on"></i><i class="sd on"></i><i class="se"></i><i class="sf on"></i><i class="sg on"></i><i class="sp"></i></div><div class="cell" style="transform:translate(102.65px,3.25px) skewX(-4.8deg) scale(.1)"><i class="sa on"></i><i class="sb on"></i><i class="sc on"></i><i class="sd on"></i><i class="se"></i><i class="sf"></i><i class="sg on"></i><i class="sp"></i></div><div class="cell" style="transform:translate(120.27px,3.25px) skewX(-4.8deg) scale(.1)"><i class="sa on"></i><i class="sb on"></i><i class="sc on"></i><i class="sd on"></i><i class="se"></i><i class="sf on"></i><i class="sg on"></i><i class="sp on"></i></div><span class="ledtxt">10539.</span></div><span class="t" style="left:1107.00px;top:661px;font-size:14px;transform:scaleX(0.9718);">RMS (mm/S)</span><div class="led" style="top:680px"><i class="mn"></i><div class="cell" style="transform:translate(14.55px,3.25px) skewX(-4.8deg) scale(.1)"><i class="sa"></i><i class="sb"></i><i class="sc"></i><i class="sd"></i><i class="se"></i><i class="sf"></i><i class="sg"></i><i class="sp"></i></div><div class="cell" style="transform:translate(32.17px,3.25px) skewX(-4.8deg) scale(.1)"><i class="sa"></i><i class="sb"></i><i class="sc"></i><i class="sd"></i><i class="se"></i><i class="sf"></i><i class="sg"></i><i class="sp"></i></div><div class="cell" style="transform:translate(49.79px,3.25px) skewX(-4.8deg) scale(.1)"><i class="sa"></i><i class="sb"></i><i class="sc"></i><i class="sd"></i><i class="se"></i><i class="sf"></i><i class="sg"></i><i class="sp"></i></div><div class="cell" style="transform:translate(67.41px,3.25px) skewX(-4.8deg) scale(.1)"><i class="sa on"></i><i class="sb on"></i><i class="sc on"></i><i class="sd on"></i><i class="se on"></i><i class="sf on"></i><i class="sg"></i><i class="sp on"></i></div><div class="cell" style="transform:translate(85.03px,3.25px) skewX(-4.8deg) scale(.1)"><i class="sa on"></i><i class="sb"></i><i class="sc on"></i><i class="sd on"></i><i class="se"></i><i class="sf on"></i><i class="sg on"></i><i class="sp"></i></div><div class="cell" style="transform:translate(102.65px,3.25px) skewX(-4.8deg) scale(.1)"><i class="sa on"></i><i class="sb on"></i><i class="sc on"></i><i class="sd"></i><i class="se"></i><i class="sf"></i><i class="sg"></i><i class="sp"></i></div><div class="cell" style="transform:translate(120.27px,3.25px) skewX(-4.8deg) scale(.1)"><i class="sa on"></i><i class="sb on"></i><i class="sc on"></i><i class="sd on"></i><i class="se"></i><i class="sf on"></i><i class="sg on"></i><i class="sp"></i></div><span class="ledtxt">0.579</span></div><span class="t" style="left:1263.30px;top:82px;font-size:14px;transform:scaleX(1.0393);">Test Date/Time</span><div class="fld ro" style="left:1263px;top:104px;width:170px"></div><span class="t" style="left:1266.10px;top:108px;font-size:12px;transform:scaleX(0.9382);color:#111;">2022/06/26 10:56:06</span><span class="t" style="left:1263.00px;top:152px;font-size:14px;transform:scaleX(1.0184);">Enter Turbine Name</span><div class="fld " style="left:1263px;top:173px;width:124px"></div><span class="t" style="left:1263.00px;top:215px;font-size:14px;transform:scaleX(1.0137);">Enter ECU Turbine Speed</span><div class="fld " style="left:1263px;top:236px;width:124px"></div><span class="t" style="left:1266.10px;top:240px;font-size:12px;transform:scaleX(0.8963);color:#1a1a1a;">45000</span><span class="t" style="left:1398.10px;top:241px;font-size:14px;transform:scaleX(0.9545);">RPM</span><div class="fld ro" style="left:1263px;top:273px;width:124px"></div><span class="t" style="left:1266.10px;top:277px;font-size:12px;transform:scaleX(0.9240);color:#6d6d6d;">750.00</span><span class="t" style="left:1398.10px;top:279px;font-size:14px;transform:scaleX(0.9758);">Hz</span><span class="t" style="left:1263.00px;top:324px;font-size:14px;">Enter ECU Turbine EGT</span><div class="fld foc" style="left:1263px;top:344px;width:124px"></div><span class="t" style="left:1266.10px;top:348px;font-size:12px;transform:scaleX(0.8946);color:#111;">420</span><span class="t" style="left:1398.10px;top:350px;font-size:14px;">Deg. C</span><div class="grp" style="left:1264px;top:503px;width:128px;height:167px"></div><div class="abs" style="left:1271px;top:500px;width:50px;height:8px;background:#000"></div><span class="t" style="left:1273.20px;top:499px;font-size:14px;transform:scaleX(1.0100);">Control</span><div class="grp" style="left:1264px;top:684px;width:128px;height:159px"></div><div class="abs" style="left:1271px;top:681px;width:54px;height:8px;background:#000"></div><span class="t" style="left:1273.40px;top:680px;font-size:14px;transform:scaleX(0.9852);">Window</span><div class="btn c" style="left:1289px;top:519px;width:79px;height:27px;background:#00ff00;"></div><span class="t" style="left:1305.60px;top:527px;font-size:13px;font-weight:bold;transform:scaleX(1.0193);color:#001a00;">START</span><div class="btn c" style="left:1289px;top:554px;width:79px;height:27px;background:#ff0000;"></div><span class="t" style="left:1305.40px;top:562px;font-size:13px;font-weight:bold;transform:scaleX(1.0454);color:#1e0000;">PAUSE</span><div class="btn" style="left:1289px;top:590px;width:80px;height:27px;background:#e5f1fb;border:1px solid #0078d7;"></div><span class="t" style="left:1298.40px;top:597px;font-size:14px;transform:scaleX(1.0161);color:#000;">Snapshot</span><div class="btn" style="left:1289px;top:627px;width:79px;height:27px;"></div><span class="t" style="left:1301.80px;top:634px;font-size:14px;color:#000;">Devices</span><div class="btn" style="left:1283px;top:701px;width:92px;height:27px;"></div><span class="t" style="left:1298.40px;top:707px;font-size:15px;font-weight:bold;transform:scaleX(1.0089);color:#000;">Settings</span><div class="btn" style="left:1283px;top:735px;width:92px;height:27px;"></div><span class="t" style="left:1307.80px;top:741px;font-size:15px;font-weight:bold;transform:scaleX(1.0176);color:#000;">Open</span><div class="btn" style="left:1283px;top:803px;width:92px;height:27px;"></div><span class="t" style="left:1311.50px;top:809px;font-size:15px;font-weight:bold;transform:scaleX(1.0049);color:#000;">EXIT</span>
</body>
</html>
